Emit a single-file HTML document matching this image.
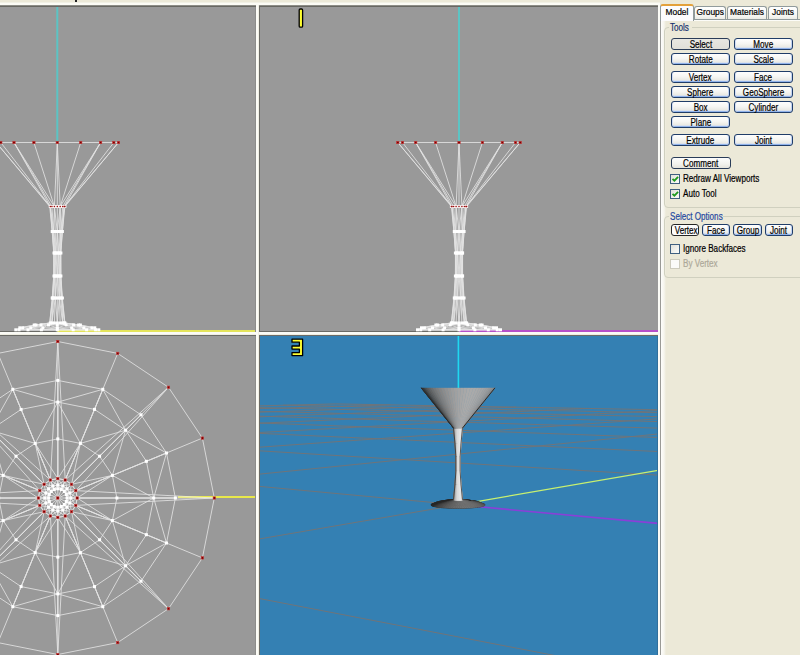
<!DOCTYPE html>
<html><head><meta charset="utf-8">
<style>
*{margin:0;padding:0;box-sizing:border-box}
html,body{width:800px;height:655px;overflow:hidden;background:#ece9d8;font-family:"Liberation Sans",sans-serif;font-size:11px;color:#000}
.a{position:absolute}
.vp{position:absolute;background:#999999;overflow:hidden}
svg{position:absolute;left:0;top:0}
.btn{position:absolute;height:12px;border:1px solid #203d68;border-radius:3px;background:linear-gradient(#fefefe,#f6f6f3 45%,#ebebe6 75%,#c4d4f2);box-shadow:inset 1px 0 0 #d2ddf4,inset -1px 0 0 #c0d2f2,inset 0 -1px 0 #90b2ea;text-align:center;font-size:10px;line-height:10px;white-space:nowrap;overflow:visible}
.btn span{display:inline-block;position:relative;top:1px;-webkit-text-stroke:0.2px #000;transform:scaleX(0.81);transform-origin:50% 0}
.btn.sel{background:linear-gradient(#e8e7e1,#e0dfd8);box-shadow:none;border-color:#2a3c58}
.btn.plain{background:linear-gradient(#fdfdfd,#f2f2ee 60%,#e4e3dc);box-shadow:none;border-color:#2a3c58}
.btn.wh{background:#fcfcfc;box-shadow:none;border-color:#262626}
.cb{position:absolute;width:10px;height:10px;border:1px solid #3f5f80;background:linear-gradient(135deg,#e0e0da,#fcfcfa)}
.cb svg{position:absolute;left:-1px;top:-1px}
.t{position:absolute;margin-top:0.8px;-webkit-text-stroke:0.2px currentColor;font-size:10px;line-height:10px;white-space:nowrap;transform:scaleX(0.81);transform-origin:0 0}
.tab{position:absolute;border:1px solid #919b9c;border-bottom:none;border-radius:3px 3px 0 0;background:linear-gradient(#fff,#f5f5f1 70%,#e8e8e1)}
.ts{position:absolute;-webkit-text-stroke:0.2px #000;left:0;right:0;top:0px;text-align:center;font-size:9.3px;line-height:10px;transform:scaleX(0.9)}
</style></head><body>
<!-- top strip -->
<div class="a" style="left:0;top:2px;width:660px;height:1px;background:#f2f1e6"></div>
<div class="a" style="left:0;top:3px;width:660px;height:2px;background:#fcfcf5"></div>
<div class="a" style="left:75px;top:0;width:2px;height:2px;background:#222"></div>
<!-- divider lines -->
<div class="a" style="left:0;top:332px;width:658px;height:2px;background:#fbfbf6"></div>
<div class="a" style="left:0;top:334px;width:658px;height:1px;background:#efeee2"></div>
<div class="a" style="left:256px;top:5px;width:2px;height:650px;background:#fbfbf6"></div>
<div class="a" style="left:258px;top:5px;width:1px;height:650px;background:#f0efe4"></div>
<div class="a" style="left:259px;top:5px;width:1px;height:327px;background:#6b6b66"></div>
<div class="a" style="left:259px;top:335px;width:1px;height:320px;background:#6b6b66"></div>
<div class="a" style="left:0;top:335px;width:256px;height:1px;background:#6b6b66"></div>
<div class="a" style="left:259px;top:335px;width:399px;height:1px;background:#6b6b66"></div>
<div class="a" style="left:658px;top:3px;width:2px;height:652px;background:#fbfbf6"></div>
<div class="a" style="left:660px;top:20px;width:1px;height:635px;background:#9a9a96"></div>
<!-- viewport TL -->
<div class="vp" style="left:0;top:6px;width:256px;height:326px">
<svg width="256" height="326"><rect x="0" y="325" width="256" height="1" fill="#6b6b66"/><line x1="57.3" y1="0" x2="57.3" y2="136.5" stroke="#5cc4c4" stroke-width="2"/><line x1="57.3" y1="325" x2="256" y2="325" stroke="#e4e45a" stroke-width="2"/><g stroke="#f0f0f0" stroke-width="0.85" opacity="0.85"><line x1="118.5" y1="136.5" x2="113.8" y2="136.5"/><line x1="118.5" y1="136.5" x2="64.9" y2="200.5"/><line x1="118.5" y1="136.5" x2="64.3" y2="200.5"/><line x1="113.8" y1="136.5" x2="100.6" y2="136.5"/><line x1="113.8" y1="136.5" x2="64.3" y2="200.5"/><line x1="100.6" y1="136.5" x2="64.3" y2="200.5"/><line x1="100.6" y1="136.5" x2="80.7" y2="136.5"/><line x1="100.6" y1="136.5" x2="62.7" y2="200.5"/><line x1="100.6" y1="136.5" x2="60.2" y2="200.5"/><line x1="80.7" y1="136.5" x2="57.3" y2="136.5"/><line x1="80.7" y1="136.5" x2="60.2" y2="200.5"/><line x1="57.3" y1="136.5" x2="60.2" y2="200.5"/><line x1="57.3" y1="136.5" x2="33.9" y2="136.5"/><line x1="57.3" y1="136.5" x2="57.3" y2="200.5"/><line x1="57.3" y1="136.5" x2="54.4" y2="200.5"/><line x1="33.9" y1="136.5" x2="14" y2="136.5"/><line x1="33.9" y1="136.5" x2="54.4" y2="200.5"/><line x1="14" y1="136.5" x2="54.4" y2="200.5"/><line x1="14" y1="136.5" x2="0.8" y2="136.5"/><line x1="14" y1="136.5" x2="51.9" y2="200.5"/><line x1="14" y1="136.5" x2="50.3" y2="200.5"/><line x1="0.8" y1="136.5" x2="-3.9" y2="136.5"/><line x1="0.8" y1="136.5" x2="50.3" y2="200.5"/><line x1="-3.9" y1="136.5" x2="50.3" y2="200.5"/><line x1="-3.9" y1="136.5" x2="49.7" y2="200.5"/><line x1="64.9" y1="200.5" x2="64.3" y2="200.5"/><line x1="64.9" y1="200.5" x2="62.4" y2="225.5"/><line x1="64.3" y1="200.5" x2="62.4" y2="225.5"/><line x1="64.3" y1="200.5" x2="62.7" y2="200.5"/><line x1="64.3" y1="200.5" x2="62" y2="225.5"/><line x1="64.3" y1="200.5" x2="60.9" y2="225.5"/><line x1="62.7" y1="200.5" x2="60.2" y2="200.5"/><line x1="62.7" y1="200.5" x2="60.9" y2="225.5"/><line x1="60.2" y1="200.5" x2="60.9" y2="225.5"/><line x1="60.2" y1="200.5" x2="57.3" y2="200.5"/><line x1="60.2" y1="200.5" x2="59.3" y2="225.5"/><line x1="60.2" y1="200.5" x2="57.3" y2="225.5"/><line x1="57.3" y1="200.5" x2="54.4" y2="200.5"/><line x1="57.3" y1="200.5" x2="57.3" y2="225.5"/><line x1="54.4" y1="200.5" x2="57.3" y2="225.5"/><line x1="54.4" y1="200.5" x2="51.9" y2="200.5"/><line x1="54.4" y1="200.5" x2="55.3" y2="225.5"/><line x1="54.4" y1="200.5" x2="53.7" y2="225.5"/><line x1="51.9" y1="200.5" x2="50.3" y2="200.5"/><line x1="51.9" y1="200.5" x2="53.7" y2="225.5"/><line x1="50.3" y1="200.5" x2="53.7" y2="225.5"/><line x1="50.3" y1="200.5" x2="49.7" y2="200.5"/><line x1="50.3" y1="200.5" x2="52.6" y2="225.5"/><line x1="50.3" y1="200.5" x2="52.2" y2="225.5"/><line x1="49.7" y1="200.5" x2="52.2" y2="225.5"/><line x1="62.4" y1="225.5" x2="62" y2="225.5"/><line x1="62.4" y1="225.5" x2="60.9" y2="247"/><line x1="62.4" y1="225.5" x2="60.6" y2="247"/><line x1="62" y1="225.5" x2="60.9" y2="225.5"/><line x1="62" y1="225.5" x2="60.6" y2="247"/><line x1="60.9" y1="225.5" x2="60.6" y2="247"/><line x1="60.9" y1="225.5" x2="59.3" y2="225.5"/><line x1="60.9" y1="225.5" x2="59.8" y2="247"/><line x1="60.9" y1="225.5" x2="58.7" y2="247"/><line x1="59.3" y1="225.5" x2="57.3" y2="225.5"/><line x1="59.3" y1="225.5" x2="58.7" y2="247"/><line x1="57.3" y1="225.5" x2="58.7" y2="247"/><line x1="57.3" y1="225.5" x2="55.3" y2="225.5"/><line x1="57.3" y1="225.5" x2="57.3" y2="247"/><line x1="57.3" y1="225.5" x2="55.9" y2="247"/><line x1="55.3" y1="225.5" x2="53.7" y2="225.5"/><line x1="55.3" y1="225.5" x2="55.9" y2="247"/><line x1="53.7" y1="225.5" x2="55.9" y2="247"/><line x1="53.7" y1="225.5" x2="52.6" y2="225.5"/><line x1="53.7" y1="225.5" x2="54.8" y2="247"/><line x1="53.7" y1="225.5" x2="54" y2="247"/><line x1="52.6" y1="225.5" x2="52.2" y2="225.5"/><line x1="52.6" y1="225.5" x2="54" y2="247"/><line x1="52.2" y1="225.5" x2="54" y2="247"/><line x1="52.2" y1="225.5" x2="53.7" y2="247"/><line x1="60.9" y1="247" x2="60.6" y2="247"/><line x1="60.9" y1="247" x2="60.9" y2="270"/><line x1="60.6" y1="247" x2="60.9" y2="270"/><line x1="60.6" y1="247" x2="59.8" y2="247"/><line x1="60.6" y1="247" x2="60.6" y2="270"/><line x1="60.6" y1="247" x2="59.8" y2="270"/><line x1="59.8" y1="247" x2="58.7" y2="247"/><line x1="59.8" y1="247" x2="59.8" y2="270"/><line x1="58.7" y1="247" x2="59.8" y2="270"/><line x1="58.7" y1="247" x2="57.3" y2="247"/><line x1="58.7" y1="247" x2="58.7" y2="270"/><line x1="58.7" y1="247" x2="57.3" y2="270"/><line x1="57.3" y1="247" x2="55.9" y2="247"/><line x1="57.3" y1="247" x2="57.3" y2="270"/><line x1="55.9" y1="247" x2="57.3" y2="270"/><line x1="55.9" y1="247" x2="54.8" y2="247"/><line x1="55.9" y1="247" x2="55.9" y2="270"/><line x1="55.9" y1="247" x2="54.8" y2="270"/><line x1="54.8" y1="247" x2="54" y2="247"/><line x1="54.8" y1="247" x2="54.8" y2="270"/><line x1="54" y1="247" x2="54.8" y2="270"/><line x1="54" y1="247" x2="53.7" y2="247"/><line x1="54" y1="247" x2="54" y2="270"/><line x1="54" y1="247" x2="53.7" y2="270"/><line x1="53.7" y1="247" x2="53.7" y2="270"/><line x1="60.9" y1="270" x2="60.6" y2="270"/><line x1="60.9" y1="270" x2="62.4" y2="292"/><line x1="60.9" y1="270" x2="62" y2="292"/><line x1="60.6" y1="270" x2="59.8" y2="270"/><line x1="60.6" y1="270" x2="62" y2="292"/><line x1="59.8" y1="270" x2="62" y2="292"/><line x1="59.8" y1="270" x2="58.7" y2="270"/><line x1="59.8" y1="270" x2="60.9" y2="292"/><line x1="59.8" y1="270" x2="59.3" y2="292"/><line x1="58.7" y1="270" x2="57.3" y2="270"/><line x1="58.7" y1="270" x2="59.3" y2="292"/><line x1="57.3" y1="270" x2="59.3" y2="292"/><line x1="57.3" y1="270" x2="55.9" y2="270"/><line x1="57.3" y1="270" x2="57.3" y2="292"/><line x1="57.3" y1="270" x2="55.3" y2="292"/><line x1="55.9" y1="270" x2="54.8" y2="270"/><line x1="55.9" y1="270" x2="55.3" y2="292"/><line x1="54.8" y1="270" x2="55.3" y2="292"/><line x1="54.8" y1="270" x2="54" y2="270"/><line x1="54.8" y1="270" x2="53.7" y2="292"/><line x1="54.8" y1="270" x2="52.6" y2="292"/><line x1="54" y1="270" x2="53.7" y2="270"/><line x1="54" y1="270" x2="52.6" y2="292"/><line x1="53.7" y1="270" x2="52.6" y2="292"/><line x1="53.7" y1="270" x2="52.2" y2="292"/><line x1="62.4" y1="292" x2="62" y2="292"/><line x1="62.4" y1="292" x2="64.9" y2="317"/><line x1="62" y1="292" x2="64.9" y2="317"/><line x1="62" y1="292" x2="60.9" y2="292"/><line x1="62" y1="292" x2="64.3" y2="317"/><line x1="62" y1="292" x2="62.7" y2="317"/><line x1="60.9" y1="292" x2="59.3" y2="292"/><line x1="60.9" y1="292" x2="62.7" y2="317"/><line x1="59.3" y1="292" x2="62.7" y2="317"/><line x1="59.3" y1="292" x2="57.3" y2="292"/><line x1="59.3" y1="292" x2="60.2" y2="317"/><line x1="59.3" y1="292" x2="57.3" y2="317"/><line x1="57.3" y1="292" x2="55.3" y2="292"/><line x1="57.3" y1="292" x2="57.3" y2="317"/><line x1="55.3" y1="292" x2="57.3" y2="317"/><line x1="55.3" y1="292" x2="53.7" y2="292"/><line x1="55.3" y1="292" x2="54.4" y2="317"/><line x1="55.3" y1="292" x2="51.9" y2="317"/><line x1="53.7" y1="292" x2="52.6" y2="292"/><line x1="53.7" y1="292" x2="51.9" y2="317"/><line x1="52.6" y1="292" x2="51.9" y2="317"/><line x1="52.6" y1="292" x2="52.2" y2="292"/><line x1="52.6" y1="292" x2="50.3" y2="317"/><line x1="52.6" y1="292" x2="49.7" y2="317"/><line x1="52.2" y1="292" x2="49.7" y2="317"/><line x1="64.9" y1="317" x2="64.3" y2="317"/><line x1="64.9" y1="317" x2="80.4" y2="319"/><line x1="64.9" y1="317" x2="78.6" y2="319"/><line x1="64.3" y1="317" x2="62.7" y2="317"/><line x1="64.3" y1="317" x2="78.6" y2="319"/><line x1="62.7" y1="317" x2="78.6" y2="319"/><line x1="62.7" y1="317" x2="60.2" y2="317"/><line x1="62.7" y1="317" x2="73.6" y2="319"/><line x1="62.7" y1="317" x2="66.1" y2="319"/><line x1="60.2" y1="317" x2="57.3" y2="317"/><line x1="60.2" y1="317" x2="66.1" y2="319"/><line x1="57.3" y1="317" x2="66.1" y2="319"/><line x1="57.3" y1="317" x2="54.4" y2="317"/><line x1="57.3" y1="317" x2="57.3" y2="319"/><line x1="57.3" y1="317" x2="48.5" y2="319"/><line x1="54.4" y1="317" x2="51.9" y2="317"/><line x1="54.4" y1="317" x2="48.5" y2="319"/><line x1="51.9" y1="317" x2="48.5" y2="319"/><line x1="51.9" y1="317" x2="50.3" y2="317"/><line x1="51.9" y1="317" x2="41" y2="319"/><line x1="51.9" y1="317" x2="36" y2="319"/><line x1="50.3" y1="317" x2="49.7" y2="317"/><line x1="50.3" y1="317" x2="36" y2="319"/><line x1="49.7" y1="317" x2="36" y2="319"/><line x1="49.7" y1="317" x2="34.2" y2="319"/><line x1="80.4" y1="319" x2="78.6" y2="319"/><line x1="80.4" y1="319" x2="94.8" y2="321.8"/><line x1="78.6" y1="319" x2="94.8" y2="321.8"/><line x1="78.6" y1="319" x2="73.6" y2="319"/><line x1="78.6" y1="319" x2="91.9" y2="321.8"/><line x1="78.6" y1="319" x2="83.8" y2="321.8"/><line x1="73.6" y1="319" x2="66.1" y2="319"/><line x1="73.6" y1="319" x2="83.8" y2="321.8"/><line x1="66.1" y1="319" x2="83.8" y2="321.8"/><line x1="66.1" y1="319" x2="57.3" y2="319"/><line x1="66.1" y1="319" x2="71.7" y2="321.8"/><line x1="66.1" y1="319" x2="57.3" y2="321.8"/><line x1="57.3" y1="319" x2="48.5" y2="319"/><line x1="57.3" y1="319" x2="57.3" y2="321.8"/><line x1="48.5" y1="319" x2="57.3" y2="321.8"/><line x1="48.5" y1="319" x2="41" y2="319"/><line x1="48.5" y1="319" x2="42.9" y2="321.8"/><line x1="48.5" y1="319" x2="30.8" y2="321.8"/><line x1="41" y1="319" x2="36" y2="319"/><line x1="41" y1="319" x2="30.8" y2="321.8"/><line x1="36" y1="319" x2="30.8" y2="321.8"/><line x1="36" y1="319" x2="34.2" y2="319"/><line x1="36" y1="319" x2="22.7" y2="321.8"/><line x1="36" y1="319" x2="19.8" y2="321.8"/><line x1="34.2" y1="319" x2="19.8" y2="321.8"/><line x1="94.8" y1="321.8" x2="91.9" y2="321.8"/><line x1="94.8" y1="321.8" x2="98.8" y2="323.8"/><line x1="94.8" y1="321.8" x2="95.6" y2="323.8"/><line x1="91.9" y1="321.8" x2="83.8" y2="321.8"/><line x1="91.9" y1="321.8" x2="95.6" y2="323.8"/><line x1="83.8" y1="321.8" x2="95.6" y2="323.8"/><line x1="83.8" y1="321.8" x2="71.7" y2="321.8"/><line x1="83.8" y1="321.8" x2="86.6" y2="323.8"/><line x1="83.8" y1="321.8" x2="73.2" y2="323.8"/><line x1="71.7" y1="321.8" x2="57.3" y2="321.8"/><line x1="71.7" y1="321.8" x2="73.2" y2="323.8"/><line x1="57.3" y1="321.8" x2="73.2" y2="323.8"/><line x1="57.3" y1="321.8" x2="42.9" y2="321.8"/><line x1="57.3" y1="321.8" x2="57.3" y2="323.8"/><line x1="57.3" y1="321.8" x2="41.4" y2="323.8"/><line x1="42.9" y1="321.8" x2="30.8" y2="321.8"/><line x1="42.9" y1="321.8" x2="41.4" y2="323.8"/><line x1="30.8" y1="321.8" x2="41.4" y2="323.8"/><line x1="30.8" y1="321.8" x2="22.7" y2="321.8"/><line x1="30.8" y1="321.8" x2="28" y2="323.8"/><line x1="30.8" y1="321.8" x2="19" y2="323.8"/><line x1="22.7" y1="321.8" x2="19.8" y2="321.8"/><line x1="22.7" y1="321.8" x2="19" y2="323.8"/><line x1="19.8" y1="321.8" x2="19" y2="323.8"/><line x1="19.8" y1="321.8" x2="15.8" y2="323.8"/><line x1="98.8" y1="323.8" x2="95.6" y2="323.8"/><line x1="95.6" y1="323.8" x2="86.6" y2="323.8"/><line x1="86.6" y1="323.8" x2="73.2" y2="323.8"/><line x1="73.2" y1="323.8" x2="57.3" y2="323.8"/><line x1="57.3" y1="323.8" x2="41.4" y2="323.8"/><line x1="41.4" y1="323.8" x2="28" y2="323.8"/><line x1="28" y1="323.8" x2="19" y2="323.8"/><line x1="19" y1="323.8" x2="15.8" y2="323.8"/><line x1="98.8" y1="323.8" x2="57.3" y2="323.8"/><line x1="95.6" y1="323.8" x2="57.3" y2="323.8"/><line x1="86.6" y1="323.8" x2="57.3" y2="323.8"/><line x1="28" y1="323.8" x2="57.3" y2="323.8"/><line x1="19" y1="323.8" x2="57.3" y2="323.8"/><line x1="15.8" y1="323.8" x2="57.3" y2="323.8"/></g><g fill="#ffffff"><rect x="63.4" y="199" width="3" height="3"/><rect x="62.8" y="199" width="3" height="3"/><rect x="61.2" y="199" width="3" height="3"/><rect x="58.7" y="199" width="3" height="3"/><rect x="55.8" y="199" width="3" height="3"/><rect x="52.9" y="199" width="3" height="3"/><rect x="50.4" y="199" width="3" height="3"/><rect x="48.8" y="199" width="3" height="3"/><rect x="60.9" y="224" width="3" height="3"/><rect x="59.4" y="224" width="3" height="3"/><rect x="57.8" y="224" width="3" height="3"/><rect x="55.8" y="224" width="3" height="3"/><rect x="53.8" y="224" width="3" height="3"/><rect x="52.2" y="224" width="3" height="3"/><rect x="51.1" y="224" width="3" height="3"/><rect x="50.7" y="224" width="3" height="3"/><rect x="59.4" y="245.5" width="3" height="3"/><rect x="58.3" y="245.5" width="3" height="3"/><rect x="57.2" y="245.5" width="3" height="3"/><rect x="55.8" y="245.5" width="3" height="3"/><rect x="54.4" y="245.5" width="3" height="3"/><rect x="53.3" y="245.5" width="3" height="3"/><rect x="52.5" y="245.5" width="3" height="3"/><rect x="59.4" y="268.5" width="3" height="3"/><rect x="58.3" y="268.5" width="3" height="3"/><rect x="57.2" y="268.5" width="3" height="3"/><rect x="55.8" y="268.5" width="3" height="3"/><rect x="54.4" y="268.5" width="3" height="3"/><rect x="53.3" y="268.5" width="3" height="3"/><rect x="52.5" y="268.5" width="3" height="3"/><rect x="60.9" y="290.5" width="3" height="3"/><rect x="59.4" y="290.5" width="3" height="3"/><rect x="57.8" y="290.5" width="3" height="3"/><rect x="55.8" y="290.5" width="3" height="3"/><rect x="53.8" y="290.5" width="3" height="3"/><rect x="52.2" y="290.5" width="3" height="3"/><rect x="51.1" y="290.5" width="3" height="3"/><rect x="50.7" y="290.5" width="3" height="3"/><rect x="63.4" y="315.5" width="3" height="3"/><rect x="62.8" y="315.5" width="3" height="3"/><rect x="61.2" y="315.5" width="3" height="3"/><rect x="58.7" y="315.5" width="3" height="3"/><rect x="55.8" y="315.5" width="3" height="3"/><rect x="52.9" y="315.5" width="3" height="3"/><rect x="50.4" y="315.5" width="3" height="3"/><rect x="48.8" y="315.5" width="3" height="3"/><rect x="78.9" y="317.5" width="3" height="3"/><rect x="77.1" y="317.5" width="3" height="3"/><rect x="72.1" y="317.5" width="3" height="3"/><rect x="64.6" y="317.5" width="3" height="3"/><rect x="55.8" y="317.5" width="3" height="3"/><rect x="47" y="317.5" width="3" height="3"/><rect x="39.5" y="317.5" width="3" height="3"/><rect x="34.5" y="317.5" width="3" height="3"/><rect x="32.7" y="317.5" width="3" height="3"/><rect x="93.3" y="320.3" width="3" height="3"/><rect x="90.4" y="320.3" width="3" height="3"/><rect x="82.3" y="320.3" width="3" height="3"/><rect x="70.2" y="320.3" width="3" height="3"/><rect x="55.8" y="320.3" width="3" height="3"/><rect x="41.4" y="320.3" width="3" height="3"/><rect x="29.3" y="320.3" width="3" height="3"/><rect x="21.2" y="320.3" width="3" height="3"/><rect x="18.3" y="320.3" width="3" height="3"/><rect x="97.3" y="322.3" width="3" height="3"/><rect x="94.1" y="322.3" width="3" height="3"/><rect x="85.1" y="322.3" width="3" height="3"/><rect x="71.7" y="322.3" width="3" height="3"/><rect x="55.8" y="322.3" width="3" height="3"/><rect x="39.9" y="322.3" width="3" height="3"/><rect x="26.5" y="322.3" width="3" height="3"/><rect x="17.5" y="322.3" width="3" height="3"/><rect x="14.3" y="322.3" width="3" height="3"/></g><g fill="#7a0000" stroke="#c83a3a" stroke-width="0.6"><rect x="117.3" y="135.3" width="2.4" height="2.4"/><rect x="112.6" y="135.3" width="2.4" height="2.4"/><rect x="99.4" y="135.3" width="2.4" height="2.4"/><rect x="79.5" y="135.3" width="2.4" height="2.4"/><rect x="56.1" y="135.3" width="2.4" height="2.4"/><rect x="32.7" y="135.3" width="2.4" height="2.4"/><rect x="12.8" y="135.3" width="2.4" height="2.4"/><rect x="-0.4" y="135.3" width="2.4" height="2.4"/><rect x="-5.1" y="135.3" width="2.4" height="2.4"/></g><g fill="#9a1010"><rect x="64.2" y="199.8" width="1.4" height="1.4"/><rect x="63.6" y="199.8" width="1.4" height="1.4"/><rect x="62" y="199.8" width="1.4" height="1.4"/><rect x="59.5" y="199.8" width="1.4" height="1.4"/><rect x="56.6" y="199.8" width="1.4" height="1.4"/><rect x="53.7" y="199.8" width="1.4" height="1.4"/><rect x="51.2" y="199.8" width="1.4" height="1.4"/><rect x="49.6" y="199.8" width="1.4" height="1.4"/></g></svg>
</div>
<!-- viewport TR -->
<div class="vp" style="left:260px;top:6px;width:398px;height:326px">
<svg width="398" height="326"><rect x="0" y="325" width="398" height="1" fill="#6b6b66"/><line x1="199" y1="0" x2="199" y2="136.5" stroke="#5cc4c4" stroke-width="2"/><line x1="199" y1="325" x2="398" y2="325" stroke="#b550c8" stroke-width="2"/><g stroke="#f0f0f0" stroke-width="0.85" opacity="0.85"><line x1="260.2" y1="136.5" x2="255.5" y2="136.5"/><line x1="260.2" y1="136.5" x2="206.6" y2="200.5"/><line x1="260.2" y1="136.5" x2="206" y2="200.5"/><line x1="255.5" y1="136.5" x2="242.3" y2="136.5"/><line x1="255.5" y1="136.5" x2="206" y2="200.5"/><line x1="242.3" y1="136.5" x2="206" y2="200.5"/><line x1="242.3" y1="136.5" x2="222.4" y2="136.5"/><line x1="242.3" y1="136.5" x2="204.4" y2="200.5"/><line x1="242.3" y1="136.5" x2="201.9" y2="200.5"/><line x1="222.4" y1="136.5" x2="199" y2="136.5"/><line x1="222.4" y1="136.5" x2="201.9" y2="200.5"/><line x1="199" y1="136.5" x2="201.9" y2="200.5"/><line x1="199" y1="136.5" x2="175.6" y2="136.5"/><line x1="199" y1="136.5" x2="199" y2="200.5"/><line x1="199" y1="136.5" x2="196.1" y2="200.5"/><line x1="175.6" y1="136.5" x2="155.7" y2="136.5"/><line x1="175.6" y1="136.5" x2="196.1" y2="200.5"/><line x1="155.7" y1="136.5" x2="196.1" y2="200.5"/><line x1="155.7" y1="136.5" x2="142.5" y2="136.5"/><line x1="155.7" y1="136.5" x2="193.6" y2="200.5"/><line x1="155.7" y1="136.5" x2="192" y2="200.5"/><line x1="142.5" y1="136.5" x2="137.8" y2="136.5"/><line x1="142.5" y1="136.5" x2="192" y2="200.5"/><line x1="137.8" y1="136.5" x2="192" y2="200.5"/><line x1="137.8" y1="136.5" x2="191.4" y2="200.5"/><line x1="206.6" y1="200.5" x2="206" y2="200.5"/><line x1="206.6" y1="200.5" x2="204.1" y2="225.5"/><line x1="206" y1="200.5" x2="204.1" y2="225.5"/><line x1="206" y1="200.5" x2="204.4" y2="200.5"/><line x1="206" y1="200.5" x2="203.7" y2="225.5"/><line x1="206" y1="200.5" x2="202.6" y2="225.5"/><line x1="204.4" y1="200.5" x2="201.9" y2="200.5"/><line x1="204.4" y1="200.5" x2="202.6" y2="225.5"/><line x1="201.9" y1="200.5" x2="202.6" y2="225.5"/><line x1="201.9" y1="200.5" x2="199" y2="200.5"/><line x1="201.9" y1="200.5" x2="201" y2="225.5"/><line x1="201.9" y1="200.5" x2="199" y2="225.5"/><line x1="199" y1="200.5" x2="196.1" y2="200.5"/><line x1="199" y1="200.5" x2="199" y2="225.5"/><line x1="196.1" y1="200.5" x2="199" y2="225.5"/><line x1="196.1" y1="200.5" x2="193.6" y2="200.5"/><line x1="196.1" y1="200.5" x2="197" y2="225.5"/><line x1="196.1" y1="200.5" x2="195.4" y2="225.5"/><line x1="193.6" y1="200.5" x2="192" y2="200.5"/><line x1="193.6" y1="200.5" x2="195.4" y2="225.5"/><line x1="192" y1="200.5" x2="195.4" y2="225.5"/><line x1="192" y1="200.5" x2="191.4" y2="200.5"/><line x1="192" y1="200.5" x2="194.3" y2="225.5"/><line x1="192" y1="200.5" x2="193.9" y2="225.5"/><line x1="191.4" y1="200.5" x2="193.9" y2="225.5"/><line x1="204.1" y1="225.5" x2="203.7" y2="225.5"/><line x1="204.1" y1="225.5" x2="202.6" y2="247"/><line x1="204.1" y1="225.5" x2="202.3" y2="247"/><line x1="203.7" y1="225.5" x2="202.6" y2="225.5"/><line x1="203.7" y1="225.5" x2="202.3" y2="247"/><line x1="202.6" y1="225.5" x2="202.3" y2="247"/><line x1="202.6" y1="225.5" x2="201" y2="225.5"/><line x1="202.6" y1="225.5" x2="201.5" y2="247"/><line x1="202.6" y1="225.5" x2="200.4" y2="247"/><line x1="201" y1="225.5" x2="199" y2="225.5"/><line x1="201" y1="225.5" x2="200.4" y2="247"/><line x1="199" y1="225.5" x2="200.4" y2="247"/><line x1="199" y1="225.5" x2="197" y2="225.5"/><line x1="199" y1="225.5" x2="199" y2="247"/><line x1="199" y1="225.5" x2="197.6" y2="247"/><line x1="197" y1="225.5" x2="195.4" y2="225.5"/><line x1="197" y1="225.5" x2="197.6" y2="247"/><line x1="195.4" y1="225.5" x2="197.6" y2="247"/><line x1="195.4" y1="225.5" x2="194.3" y2="225.5"/><line x1="195.4" y1="225.5" x2="196.5" y2="247"/><line x1="195.4" y1="225.5" x2="195.7" y2="247"/><line x1="194.3" y1="225.5" x2="193.9" y2="225.5"/><line x1="194.3" y1="225.5" x2="195.7" y2="247"/><line x1="193.9" y1="225.5" x2="195.7" y2="247"/><line x1="193.9" y1="225.5" x2="195.4" y2="247"/><line x1="202.6" y1="247" x2="202.3" y2="247"/><line x1="202.6" y1="247" x2="202.6" y2="270"/><line x1="202.3" y1="247" x2="202.6" y2="270"/><line x1="202.3" y1="247" x2="201.5" y2="247"/><line x1="202.3" y1="247" x2="202.3" y2="270"/><line x1="202.3" y1="247" x2="201.5" y2="270"/><line x1="201.5" y1="247" x2="200.4" y2="247"/><line x1="201.5" y1="247" x2="201.5" y2="270"/><line x1="200.4" y1="247" x2="201.5" y2="270"/><line x1="200.4" y1="247" x2="199" y2="247"/><line x1="200.4" y1="247" x2="200.4" y2="270"/><line x1="200.4" y1="247" x2="199" y2="270"/><line x1="199" y1="247" x2="197.6" y2="247"/><line x1="199" y1="247" x2="199" y2="270"/><line x1="197.6" y1="247" x2="199" y2="270"/><line x1="197.6" y1="247" x2="196.5" y2="247"/><line x1="197.6" y1="247" x2="197.6" y2="270"/><line x1="197.6" y1="247" x2="196.5" y2="270"/><line x1="196.5" y1="247" x2="195.7" y2="247"/><line x1="196.5" y1="247" x2="196.5" y2="270"/><line x1="195.7" y1="247" x2="196.5" y2="270"/><line x1="195.7" y1="247" x2="195.4" y2="247"/><line x1="195.7" y1="247" x2="195.7" y2="270"/><line x1="195.7" y1="247" x2="195.4" y2="270"/><line x1="195.4" y1="247" x2="195.4" y2="270"/><line x1="202.6" y1="270" x2="202.3" y2="270"/><line x1="202.6" y1="270" x2="204.1" y2="292"/><line x1="202.6" y1="270" x2="203.7" y2="292"/><line x1="202.3" y1="270" x2="201.5" y2="270"/><line x1="202.3" y1="270" x2="203.7" y2="292"/><line x1="201.5" y1="270" x2="203.7" y2="292"/><line x1="201.5" y1="270" x2="200.4" y2="270"/><line x1="201.5" y1="270" x2="202.6" y2="292"/><line x1="201.5" y1="270" x2="201" y2="292"/><line x1="200.4" y1="270" x2="199" y2="270"/><line x1="200.4" y1="270" x2="201" y2="292"/><line x1="199" y1="270" x2="201" y2="292"/><line x1="199" y1="270" x2="197.6" y2="270"/><line x1="199" y1="270" x2="199" y2="292"/><line x1="199" y1="270" x2="197" y2="292"/><line x1="197.6" y1="270" x2="196.5" y2="270"/><line x1="197.6" y1="270" x2="197" y2="292"/><line x1="196.5" y1="270" x2="197" y2="292"/><line x1="196.5" y1="270" x2="195.7" y2="270"/><line x1="196.5" y1="270" x2="195.4" y2="292"/><line x1="196.5" y1="270" x2="194.3" y2="292"/><line x1="195.7" y1="270" x2="195.4" y2="270"/><line x1="195.7" y1="270" x2="194.3" y2="292"/><line x1="195.4" y1="270" x2="194.3" y2="292"/><line x1="195.4" y1="270" x2="193.9" y2="292"/><line x1="204.1" y1="292" x2="203.7" y2="292"/><line x1="204.1" y1="292" x2="206.6" y2="317"/><line x1="203.7" y1="292" x2="206.6" y2="317"/><line x1="203.7" y1="292" x2="202.6" y2="292"/><line x1="203.7" y1="292" x2="206" y2="317"/><line x1="203.7" y1="292" x2="204.4" y2="317"/><line x1="202.6" y1="292" x2="201" y2="292"/><line x1="202.6" y1="292" x2="204.4" y2="317"/><line x1="201" y1="292" x2="204.4" y2="317"/><line x1="201" y1="292" x2="199" y2="292"/><line x1="201" y1="292" x2="201.9" y2="317"/><line x1="201" y1="292" x2="199" y2="317"/><line x1="199" y1="292" x2="197" y2="292"/><line x1="199" y1="292" x2="199" y2="317"/><line x1="197" y1="292" x2="199" y2="317"/><line x1="197" y1="292" x2="195.4" y2="292"/><line x1="197" y1="292" x2="196.1" y2="317"/><line x1="197" y1="292" x2="193.6" y2="317"/><line x1="195.4" y1="292" x2="194.3" y2="292"/><line x1="195.4" y1="292" x2="193.6" y2="317"/><line x1="194.3" y1="292" x2="193.6" y2="317"/><line x1="194.3" y1="292" x2="193.9" y2="292"/><line x1="194.3" y1="292" x2="192" y2="317"/><line x1="194.3" y1="292" x2="191.4" y2="317"/><line x1="193.9" y1="292" x2="191.4" y2="317"/><line x1="206.6" y1="317" x2="206" y2="317"/><line x1="206.6" y1="317" x2="222.1" y2="319"/><line x1="206.6" y1="317" x2="220.3" y2="319"/><line x1="206" y1="317" x2="204.4" y2="317"/><line x1="206" y1="317" x2="220.3" y2="319"/><line x1="204.4" y1="317" x2="220.3" y2="319"/><line x1="204.4" y1="317" x2="201.9" y2="317"/><line x1="204.4" y1="317" x2="215.3" y2="319"/><line x1="204.4" y1="317" x2="207.8" y2="319"/><line x1="201.9" y1="317" x2="199" y2="317"/><line x1="201.9" y1="317" x2="207.8" y2="319"/><line x1="199" y1="317" x2="207.8" y2="319"/><line x1="199" y1="317" x2="196.1" y2="317"/><line x1="199" y1="317" x2="199" y2="319"/><line x1="199" y1="317" x2="190.2" y2="319"/><line x1="196.1" y1="317" x2="193.6" y2="317"/><line x1="196.1" y1="317" x2="190.2" y2="319"/><line x1="193.6" y1="317" x2="190.2" y2="319"/><line x1="193.6" y1="317" x2="192" y2="317"/><line x1="193.6" y1="317" x2="182.7" y2="319"/><line x1="193.6" y1="317" x2="177.7" y2="319"/><line x1="192" y1="317" x2="191.4" y2="317"/><line x1="192" y1="317" x2="177.7" y2="319"/><line x1="191.4" y1="317" x2="177.7" y2="319"/><line x1="191.4" y1="317" x2="175.9" y2="319"/><line x1="222.1" y1="319" x2="220.3" y2="319"/><line x1="222.1" y1="319" x2="236.5" y2="321.8"/><line x1="220.3" y1="319" x2="236.5" y2="321.8"/><line x1="220.3" y1="319" x2="215.3" y2="319"/><line x1="220.3" y1="319" x2="233.6" y2="321.8"/><line x1="220.3" y1="319" x2="225.5" y2="321.8"/><line x1="215.3" y1="319" x2="207.8" y2="319"/><line x1="215.3" y1="319" x2="225.5" y2="321.8"/><line x1="207.8" y1="319" x2="225.5" y2="321.8"/><line x1="207.8" y1="319" x2="199" y2="319"/><line x1="207.8" y1="319" x2="213.4" y2="321.8"/><line x1="207.8" y1="319" x2="199" y2="321.8"/><line x1="199" y1="319" x2="190.2" y2="319"/><line x1="199" y1="319" x2="199" y2="321.8"/><line x1="190.2" y1="319" x2="199" y2="321.8"/><line x1="190.2" y1="319" x2="182.7" y2="319"/><line x1="190.2" y1="319" x2="184.6" y2="321.8"/><line x1="190.2" y1="319" x2="172.5" y2="321.8"/><line x1="182.7" y1="319" x2="177.7" y2="319"/><line x1="182.7" y1="319" x2="172.5" y2="321.8"/><line x1="177.7" y1="319" x2="172.5" y2="321.8"/><line x1="177.7" y1="319" x2="175.9" y2="319"/><line x1="177.7" y1="319" x2="164.4" y2="321.8"/><line x1="177.7" y1="319" x2="161.5" y2="321.8"/><line x1="175.9" y1="319" x2="161.5" y2="321.8"/><line x1="236.5" y1="321.8" x2="233.6" y2="321.8"/><line x1="236.5" y1="321.8" x2="240.5" y2="323.8"/><line x1="236.5" y1="321.8" x2="237.3" y2="323.8"/><line x1="233.6" y1="321.8" x2="225.5" y2="321.8"/><line x1="233.6" y1="321.8" x2="237.3" y2="323.8"/><line x1="225.5" y1="321.8" x2="237.3" y2="323.8"/><line x1="225.5" y1="321.8" x2="213.4" y2="321.8"/><line x1="225.5" y1="321.8" x2="228.3" y2="323.8"/><line x1="225.5" y1="321.8" x2="214.9" y2="323.8"/><line x1="213.4" y1="321.8" x2="199" y2="321.8"/><line x1="213.4" y1="321.8" x2="214.9" y2="323.8"/><line x1="199" y1="321.8" x2="214.9" y2="323.8"/><line x1="199" y1="321.8" x2="184.6" y2="321.8"/><line x1="199" y1="321.8" x2="199" y2="323.8"/><line x1="199" y1="321.8" x2="183.1" y2="323.8"/><line x1="184.6" y1="321.8" x2="172.5" y2="321.8"/><line x1="184.6" y1="321.8" x2="183.1" y2="323.8"/><line x1="172.5" y1="321.8" x2="183.1" y2="323.8"/><line x1="172.5" y1="321.8" x2="164.4" y2="321.8"/><line x1="172.5" y1="321.8" x2="169.7" y2="323.8"/><line x1="172.5" y1="321.8" x2="160.7" y2="323.8"/><line x1="164.4" y1="321.8" x2="161.5" y2="321.8"/><line x1="164.4" y1="321.8" x2="160.7" y2="323.8"/><line x1="161.5" y1="321.8" x2="160.7" y2="323.8"/><line x1="161.5" y1="321.8" x2="157.5" y2="323.8"/><line x1="240.5" y1="323.8" x2="237.3" y2="323.8"/><line x1="237.3" y1="323.8" x2="228.3" y2="323.8"/><line x1="228.3" y1="323.8" x2="214.9" y2="323.8"/><line x1="214.9" y1="323.8" x2="199" y2="323.8"/><line x1="199" y1="323.8" x2="183.1" y2="323.8"/><line x1="183.1" y1="323.8" x2="169.7" y2="323.8"/><line x1="169.7" y1="323.8" x2="160.7" y2="323.8"/><line x1="160.7" y1="323.8" x2="157.5" y2="323.8"/><line x1="240.5" y1="323.8" x2="199" y2="323.8"/><line x1="237.3" y1="323.8" x2="199" y2="323.8"/><line x1="228.3" y1="323.8" x2="199" y2="323.8"/><line x1="169.7" y1="323.8" x2="199" y2="323.8"/><line x1="160.7" y1="323.8" x2="199" y2="323.8"/><line x1="157.5" y1="323.8" x2="199" y2="323.8"/></g><g fill="#ffffff"><rect x="205.1" y="199" width="3" height="3"/><rect x="204.5" y="199" width="3" height="3"/><rect x="202.9" y="199" width="3" height="3"/><rect x="200.4" y="199" width="3" height="3"/><rect x="197.5" y="199" width="3" height="3"/><rect x="194.6" y="199" width="3" height="3"/><rect x="192.1" y="199" width="3" height="3"/><rect x="190.5" y="199" width="3" height="3"/><rect x="189.9" y="199" width="3" height="3"/><rect x="202.6" y="224" width="3" height="3"/><rect x="201.1" y="224" width="3" height="3"/><rect x="199.5" y="224" width="3" height="3"/><rect x="197.5" y="224" width="3" height="3"/><rect x="195.5" y="224" width="3" height="3"/><rect x="193.9" y="224" width="3" height="3"/><rect x="192.8" y="224" width="3" height="3"/><rect x="201.1" y="245.5" width="3" height="3"/><rect x="200.8" y="245.5" width="3" height="3"/><rect x="198.9" y="245.5" width="3" height="3"/><rect x="197.5" y="245.5" width="3" height="3"/><rect x="196.1" y="245.5" width="3" height="3"/><rect x="195" y="245.5" width="3" height="3"/><rect x="193.9" y="245.5" width="3" height="3"/><rect x="201.1" y="268.5" width="3" height="3"/><rect x="200.8" y="268.5" width="3" height="3"/><rect x="198.9" y="268.5" width="3" height="3"/><rect x="197.5" y="268.5" width="3" height="3"/><rect x="196.1" y="268.5" width="3" height="3"/><rect x="195" y="268.5" width="3" height="3"/><rect x="193.9" y="268.5" width="3" height="3"/><rect x="202.6" y="290.5" width="3" height="3"/><rect x="201.1" y="290.5" width="3" height="3"/><rect x="199.5" y="290.5" width="3" height="3"/><rect x="197.5" y="290.5" width="3" height="3"/><rect x="195.5" y="290.5" width="3" height="3"/><rect x="193.9" y="290.5" width="3" height="3"/><rect x="192.8" y="290.5" width="3" height="3"/><rect x="205.1" y="315.5" width="3" height="3"/><rect x="204.5" y="315.5" width="3" height="3"/><rect x="202.9" y="315.5" width="3" height="3"/><rect x="200.4" y="315.5" width="3" height="3"/><rect x="197.5" y="315.5" width="3" height="3"/><rect x="194.6" y="315.5" width="3" height="3"/><rect x="192.1" y="315.5" width="3" height="3"/><rect x="190.5" y="315.5" width="3" height="3"/><rect x="189.9" y="315.5" width="3" height="3"/><rect x="220.6" y="317.5" width="3" height="3"/><rect x="218.8" y="317.5" width="3" height="3"/><rect x="213.8" y="317.5" width="3" height="3"/><rect x="206.3" y="317.5" width="3" height="3"/><rect x="197.5" y="317.5" width="3" height="3"/><rect x="188.7" y="317.5" width="3" height="3"/><rect x="181.2" y="317.5" width="3" height="3"/><rect x="176.2" y="317.5" width="3" height="3"/><rect x="174.4" y="317.5" width="3" height="3"/><rect x="235" y="320.3" width="3" height="3"/><rect x="232.1" y="320.3" width="3" height="3"/><rect x="224" y="320.3" width="3" height="3"/><rect x="211.9" y="320.3" width="3" height="3"/><rect x="197.5" y="320.3" width="3" height="3"/><rect x="183.1" y="320.3" width="3" height="3"/><rect x="171" y="320.3" width="3" height="3"/><rect x="162.9" y="320.3" width="3" height="3"/><rect x="160" y="320.3" width="3" height="3"/><rect x="239" y="322.3" width="3" height="3"/><rect x="235.8" y="322.3" width="3" height="3"/><rect x="226.8" y="322.3" width="3" height="3"/><rect x="213.4" y="322.3" width="3" height="3"/><rect x="197.5" y="322.3" width="3" height="3"/><rect x="181.6" y="322.3" width="3" height="3"/><rect x="168.2" y="322.3" width="3" height="3"/><rect x="159.2" y="322.3" width="3" height="3"/><rect x="156" y="322.3" width="3" height="3"/></g><g fill="#7a0000" stroke="#c83a3a" stroke-width="0.6"><rect x="259" y="135.3" width="2.4" height="2.4"/><rect x="254.3" y="135.3" width="2.4" height="2.4"/><rect x="241.1" y="135.3" width="2.4" height="2.4"/><rect x="221.2" y="135.3" width="2.4" height="2.4"/><rect x="197.8" y="135.3" width="2.4" height="2.4"/><rect x="174.4" y="135.3" width="2.4" height="2.4"/><rect x="154.5" y="135.3" width="2.4" height="2.4"/><rect x="141.3" y="135.3" width="2.4" height="2.4"/><rect x="136.6" y="135.3" width="2.4" height="2.4"/></g><g fill="#9a1010"><rect x="205.9" y="199.8" width="1.4" height="1.4"/><rect x="205.3" y="199.8" width="1.4" height="1.4"/><rect x="203.7" y="199.8" width="1.4" height="1.4"/><rect x="201.2" y="199.8" width="1.4" height="1.4"/><rect x="198.3" y="199.8" width="1.4" height="1.4"/><rect x="195.4" y="199.8" width="1.4" height="1.4"/><rect x="192.9" y="199.8" width="1.4" height="1.4"/><rect x="191.3" y="199.8" width="1.4" height="1.4"/><rect x="190.7" y="199.8" width="1.4" height="1.4"/></g><rect x="39.2" y="3" width="3.4" height="18.2" rx="1" fill="#ffff30" stroke="#000" stroke-width="1.3"/></svg>
</div>
<!-- viewport BL -->
<div class="vp" style="left:0;top:336px;width:256px;height:319px">
<svg width="256" height="319"><line x1="178" y1="161" x2="256" y2="161" stroke="#e8e84a" stroke-width="2"/><g stroke="#f0f0f0" stroke-width="0.85" opacity="0.85"><line x1="214.3" y1="162" x2="202.4" y2="102.1"/><line x1="214.3" y1="162" x2="77.2" y2="162"/><line x1="214.3" y1="162" x2="75.8" y2="154.6"/><line x1="202.4" y1="102.1" x2="168.5" y2="51.3"/><line x1="202.4" y1="102.1" x2="75.8" y2="154.6"/><line x1="168.5" y1="51.3" x2="75.8" y2="154.6"/><line x1="168.5" y1="51.3" x2="117.7" y2="17.4"/><line x1="168.5" y1="51.3" x2="71.5" y2="148.3"/><line x1="168.5" y1="51.3" x2="65.2" y2="144"/><line x1="117.7" y1="17.4" x2="57.8" y2="5.5"/><line x1="117.7" y1="17.4" x2="65.2" y2="144"/><line x1="57.8" y1="5.5" x2="65.2" y2="144"/><line x1="57.8" y1="5.5" x2="-2.1" y2="17.4"/><line x1="57.8" y1="5.5" x2="57.8" y2="142.6"/><line x1="57.8" y1="5.5" x2="50.4" y2="144"/><line x1="-2.1" y1="17.4" x2="-52.9" y2="51.3"/><line x1="-2.1" y1="17.4" x2="50.4" y2="144"/><line x1="-52.9" y1="51.3" x2="50.4" y2="144"/><line x1="-52.9" y1="51.3" x2="-86.8" y2="102.1"/><line x1="-52.9" y1="51.3" x2="44.1" y2="148.3"/><line x1="-52.9" y1="51.3" x2="39.8" y2="154.6"/><line x1="-86.8" y1="102.1" x2="-98.7" y2="162"/><line x1="-86.8" y1="102.1" x2="39.8" y2="154.6"/><line x1="-98.7" y1="162" x2="39.8" y2="154.6"/><line x1="-98.7" y1="162" x2="-86.8" y2="221.9"/><line x1="-98.7" y1="162" x2="38.4" y2="162"/><line x1="-98.7" y1="162" x2="39.8" y2="169.4"/><line x1="-86.8" y1="221.9" x2="-52.9" y2="272.7"/><line x1="-86.8" y1="221.9" x2="39.8" y2="169.4"/><line x1="-52.9" y1="272.7" x2="39.8" y2="169.4"/><line x1="-52.9" y1="272.7" x2="-2.1" y2="306.6"/><line x1="-52.9" y1="272.7" x2="44.1" y2="175.7"/><line x1="-52.9" y1="272.7" x2="50.4" y2="180"/><line x1="-2.1" y1="306.6" x2="57.8" y2="318.5"/><line x1="-2.1" y1="306.6" x2="50.4" y2="180"/><line x1="57.8" y1="318.5" x2="50.4" y2="180"/><line x1="57.8" y1="318.5" x2="117.7" y2="306.6"/><line x1="57.8" y1="318.5" x2="57.8" y2="181.4"/><line x1="57.8" y1="318.5" x2="65.2" y2="180"/><line x1="117.7" y1="306.6" x2="168.5" y2="272.7"/><line x1="117.7" y1="306.6" x2="65.2" y2="180"/><line x1="168.5" y1="272.7" x2="65.2" y2="180"/><line x1="168.5" y1="272.7" x2="202.4" y2="221.9"/><line x1="168.5" y1="272.7" x2="71.5" y2="175.7"/><line x1="168.5" y1="272.7" x2="75.8" y2="169.4"/><line x1="202.4" y1="221.9" x2="214.3" y2="162"/><line x1="202.4" y1="221.9" x2="75.8" y2="169.4"/><line x1="214.3" y1="162" x2="75.8" y2="169.4"/><line x1="77.2" y1="162" x2="75.8" y2="154.6"/><line x1="77.2" y1="162" x2="70.8" y2="162"/><line x1="75.8" y1="154.6" x2="70.8" y2="162"/><line x1="75.8" y1="154.6" x2="71.5" y2="148.3"/><line x1="75.8" y1="154.6" x2="69.8" y2="157"/><line x1="75.8" y1="154.6" x2="67" y2="152.8"/><line x1="71.5" y1="148.3" x2="65.2" y2="144"/><line x1="71.5" y1="148.3" x2="67" y2="152.8"/><line x1="65.2" y1="144" x2="67" y2="152.8"/><line x1="65.2" y1="144" x2="57.8" y2="142.6"/><line x1="65.2" y1="144" x2="62.8" y2="150"/><line x1="65.2" y1="144" x2="57.8" y2="149"/><line x1="57.8" y1="142.6" x2="50.4" y2="144"/><line x1="57.8" y1="142.6" x2="57.8" y2="149"/><line x1="50.4" y1="144" x2="57.8" y2="149"/><line x1="50.4" y1="144" x2="44.1" y2="148.3"/><line x1="50.4" y1="144" x2="52.8" y2="150"/><line x1="50.4" y1="144" x2="48.6" y2="152.8"/><line x1="44.1" y1="148.3" x2="39.8" y2="154.6"/><line x1="44.1" y1="148.3" x2="48.6" y2="152.8"/><line x1="39.8" y1="154.6" x2="48.6" y2="152.8"/><line x1="39.8" y1="154.6" x2="38.4" y2="162"/><line x1="39.8" y1="154.6" x2="45.8" y2="157"/><line x1="39.8" y1="154.6" x2="44.8" y2="162"/><line x1="38.4" y1="162" x2="39.8" y2="169.4"/><line x1="38.4" y1="162" x2="44.8" y2="162"/><line x1="39.8" y1="169.4" x2="44.8" y2="162"/><line x1="39.8" y1="169.4" x2="44.1" y2="175.7"/><line x1="39.8" y1="169.4" x2="45.8" y2="167"/><line x1="39.8" y1="169.4" x2="48.6" y2="171.2"/><line x1="44.1" y1="175.7" x2="50.4" y2="180"/><line x1="44.1" y1="175.7" x2="48.6" y2="171.2"/><line x1="50.4" y1="180" x2="48.6" y2="171.2"/><line x1="50.4" y1="180" x2="57.8" y2="181.4"/><line x1="50.4" y1="180" x2="52.8" y2="174"/><line x1="50.4" y1="180" x2="57.8" y2="175"/><line x1="57.8" y1="181.4" x2="65.2" y2="180"/><line x1="57.8" y1="181.4" x2="57.8" y2="175"/><line x1="65.2" y1="180" x2="57.8" y2="175"/><line x1="65.2" y1="180" x2="71.5" y2="175.7"/><line x1="65.2" y1="180" x2="62.8" y2="174"/><line x1="65.2" y1="180" x2="67" y2="171.2"/><line x1="71.5" y1="175.7" x2="75.8" y2="169.4"/><line x1="71.5" y1="175.7" x2="67" y2="171.2"/><line x1="75.8" y1="169.4" x2="67" y2="171.2"/><line x1="75.8" y1="169.4" x2="77.2" y2="162"/><line x1="75.8" y1="169.4" x2="69.8" y2="167"/><line x1="75.8" y1="169.4" x2="70.8" y2="162"/><line x1="70.8" y1="162" x2="69.8" y2="157"/><line x1="70.8" y1="162" x2="67" y2="162"/><line x1="70.8" y1="162" x2="66.3" y2="158.5"/><line x1="69.8" y1="157" x2="67" y2="152.8"/><line x1="69.8" y1="157" x2="66.3" y2="158.5"/><line x1="67" y1="152.8" x2="66.3" y2="158.5"/><line x1="67" y1="152.8" x2="62.8" y2="150"/><line x1="67" y1="152.8" x2="64.3" y2="155.5"/><line x1="67" y1="152.8" x2="61.3" y2="153.5"/><line x1="62.8" y1="150" x2="57.8" y2="149"/><line x1="62.8" y1="150" x2="61.3" y2="153.5"/><line x1="57.8" y1="149" x2="61.3" y2="153.5"/><line x1="57.8" y1="149" x2="52.8" y2="150"/><line x1="57.8" y1="149" x2="57.8" y2="152.8"/><line x1="57.8" y1="149" x2="54.3" y2="153.5"/><line x1="52.8" y1="150" x2="48.6" y2="152.8"/><line x1="52.8" y1="150" x2="54.3" y2="153.5"/><line x1="48.6" y1="152.8" x2="54.3" y2="153.5"/><line x1="48.6" y1="152.8" x2="45.8" y2="157"/><line x1="48.6" y1="152.8" x2="51.3" y2="155.5"/><line x1="48.6" y1="152.8" x2="49.3" y2="158.5"/><line x1="45.8" y1="157" x2="44.8" y2="162"/><line x1="45.8" y1="157" x2="49.3" y2="158.5"/><line x1="44.8" y1="162" x2="49.3" y2="158.5"/><line x1="44.8" y1="162" x2="45.8" y2="167"/><line x1="44.8" y1="162" x2="48.6" y2="162"/><line x1="44.8" y1="162" x2="49.3" y2="165.5"/><line x1="45.8" y1="167" x2="48.6" y2="171.2"/><line x1="45.8" y1="167" x2="49.3" y2="165.5"/><line x1="48.6" y1="171.2" x2="49.3" y2="165.5"/><line x1="48.6" y1="171.2" x2="52.8" y2="174"/><line x1="48.6" y1="171.2" x2="51.3" y2="168.5"/><line x1="48.6" y1="171.2" x2="54.3" y2="170.5"/><line x1="52.8" y1="174" x2="57.8" y2="175"/><line x1="52.8" y1="174" x2="54.3" y2="170.5"/><line x1="57.8" y1="175" x2="54.3" y2="170.5"/><line x1="57.8" y1="175" x2="62.8" y2="174"/><line x1="57.8" y1="175" x2="57.8" y2="171.2"/><line x1="57.8" y1="175" x2="61.3" y2="170.5"/><line x1="62.8" y1="174" x2="67" y2="171.2"/><line x1="62.8" y1="174" x2="61.3" y2="170.5"/><line x1="67" y1="171.2" x2="61.3" y2="170.5"/><line x1="67" y1="171.2" x2="69.8" y2="167"/><line x1="67" y1="171.2" x2="64.3" y2="168.5"/><line x1="67" y1="171.2" x2="66.3" y2="165.5"/><line x1="69.8" y1="167" x2="70.8" y2="162"/><line x1="69.8" y1="167" x2="66.3" y2="165.5"/><line x1="70.8" y1="162" x2="66.3" y2="165.5"/><line x1="67" y1="162" x2="66.3" y2="158.5"/><line x1="67" y1="162" x2="67" y2="162"/><line x1="66.3" y1="158.5" x2="67" y2="162"/><line x1="66.3" y1="158.5" x2="64.3" y2="155.5"/><line x1="66.3" y1="158.5" x2="66.3" y2="158.5"/><line x1="66.3" y1="158.5" x2="64.3" y2="155.5"/><line x1="64.3" y1="155.5" x2="61.3" y2="153.5"/><line x1="64.3" y1="155.5" x2="64.3" y2="155.5"/><line x1="61.3" y1="153.5" x2="64.3" y2="155.5"/><line x1="61.3" y1="153.5" x2="57.8" y2="152.8"/><line x1="61.3" y1="153.5" x2="61.3" y2="153.5"/><line x1="61.3" y1="153.5" x2="57.8" y2="152.8"/><line x1="57.8" y1="152.8" x2="54.3" y2="153.5"/><line x1="57.8" y1="152.8" x2="57.8" y2="152.8"/><line x1="54.3" y1="153.5" x2="57.8" y2="152.8"/><line x1="54.3" y1="153.5" x2="51.3" y2="155.5"/><line x1="54.3" y1="153.5" x2="54.3" y2="153.5"/><line x1="54.3" y1="153.5" x2="51.3" y2="155.5"/><line x1="51.3" y1="155.5" x2="49.3" y2="158.5"/><line x1="51.3" y1="155.5" x2="51.3" y2="155.5"/><line x1="49.3" y1="158.5" x2="51.3" y2="155.5"/><line x1="49.3" y1="158.5" x2="48.6" y2="162"/><line x1="49.3" y1="158.5" x2="49.3" y2="158.5"/><line x1="49.3" y1="158.5" x2="48.6" y2="162"/><line x1="48.6" y1="162" x2="49.3" y2="165.5"/><line x1="48.6" y1="162" x2="48.6" y2="162"/><line x1="49.3" y1="165.5" x2="48.6" y2="162"/><line x1="49.3" y1="165.5" x2="51.3" y2="168.5"/><line x1="49.3" y1="165.5" x2="49.3" y2="165.5"/><line x1="49.3" y1="165.5" x2="51.3" y2="168.5"/><line x1="51.3" y1="168.5" x2="54.3" y2="170.5"/><line x1="51.3" y1="168.5" x2="51.3" y2="168.5"/><line x1="54.3" y1="170.5" x2="51.3" y2="168.5"/><line x1="54.3" y1="170.5" x2="57.8" y2="171.2"/><line x1="54.3" y1="170.5" x2="54.3" y2="170.5"/><line x1="54.3" y1="170.5" x2="57.8" y2="171.2"/><line x1="57.8" y1="171.2" x2="61.3" y2="170.5"/><line x1="57.8" y1="171.2" x2="57.8" y2="171.2"/><line x1="61.3" y1="170.5" x2="57.8" y2="171.2"/><line x1="61.3" y1="170.5" x2="64.3" y2="168.5"/><line x1="61.3" y1="170.5" x2="61.3" y2="170.5"/><line x1="61.3" y1="170.5" x2="64.3" y2="168.5"/><line x1="64.3" y1="168.5" x2="66.3" y2="165.5"/><line x1="64.3" y1="168.5" x2="64.3" y2="168.5"/><line x1="66.3" y1="165.5" x2="64.3" y2="168.5"/><line x1="66.3" y1="165.5" x2="67" y2="162"/><line x1="66.3" y1="165.5" x2="66.3" y2="165.5"/><line x1="66.3" y1="165.5" x2="67" y2="162"/><line x1="67" y1="162" x2="66.3" y2="158.5"/><line x1="67" y1="162" x2="70.8" y2="162"/><line x1="67" y1="162" x2="69.8" y2="157"/><line x1="66.3" y1="158.5" x2="64.3" y2="155.5"/><line x1="66.3" y1="158.5" x2="69.8" y2="157"/><line x1="64.3" y1="155.5" x2="69.8" y2="157"/><line x1="64.3" y1="155.5" x2="61.3" y2="153.5"/><line x1="64.3" y1="155.5" x2="67" y2="152.8"/><line x1="64.3" y1="155.5" x2="62.8" y2="150"/><line x1="61.3" y1="153.5" x2="57.8" y2="152.8"/><line x1="61.3" y1="153.5" x2="62.8" y2="150"/><line x1="57.8" y1="152.8" x2="62.8" y2="150"/><line x1="57.8" y1="152.8" x2="54.3" y2="153.5"/><line x1="57.8" y1="152.8" x2="57.8" y2="149"/><line x1="57.8" y1="152.8" x2="52.8" y2="150"/><line x1="54.3" y1="153.5" x2="51.3" y2="155.5"/><line x1="54.3" y1="153.5" x2="52.8" y2="150"/><line x1="51.3" y1="155.5" x2="52.8" y2="150"/><line x1="51.3" y1="155.5" x2="49.3" y2="158.5"/><line x1="51.3" y1="155.5" x2="48.6" y2="152.8"/><line x1="51.3" y1="155.5" x2="45.8" y2="157"/><line x1="49.3" y1="158.5" x2="48.6" y2="162"/><line x1="49.3" y1="158.5" x2="45.8" y2="157"/><line x1="48.6" y1="162" x2="45.8" y2="157"/><line x1="48.6" y1="162" x2="49.3" y2="165.5"/><line x1="48.6" y1="162" x2="44.8" y2="162"/><line x1="48.6" y1="162" x2="45.8" y2="167"/><line x1="49.3" y1="165.5" x2="51.3" y2="168.5"/><line x1="49.3" y1="165.5" x2="45.8" y2="167"/><line x1="51.3" y1="168.5" x2="45.8" y2="167"/><line x1="51.3" y1="168.5" x2="54.3" y2="170.5"/><line x1="51.3" y1="168.5" x2="48.6" y2="171.2"/><line x1="51.3" y1="168.5" x2="52.8" y2="174"/><line x1="54.3" y1="170.5" x2="57.8" y2="171.2"/><line x1="54.3" y1="170.5" x2="52.8" y2="174"/><line x1="57.8" y1="171.2" x2="52.8" y2="174"/><line x1="57.8" y1="171.2" x2="61.3" y2="170.5"/><line x1="57.8" y1="171.2" x2="57.8" y2="175"/><line x1="57.8" y1="171.2" x2="62.8" y2="174"/><line x1="61.3" y1="170.5" x2="64.3" y2="168.5"/><line x1="61.3" y1="170.5" x2="62.8" y2="174"/><line x1="64.3" y1="168.5" x2="62.8" y2="174"/><line x1="64.3" y1="168.5" x2="66.3" y2="165.5"/><line x1="64.3" y1="168.5" x2="67" y2="171.2"/><line x1="64.3" y1="168.5" x2="69.8" y2="167"/><line x1="66.3" y1="165.5" x2="67" y2="162"/><line x1="66.3" y1="165.5" x2="69.8" y2="167"/><line x1="67" y1="162" x2="69.8" y2="167"/><line x1="70.8" y1="162" x2="69.8" y2="157"/><line x1="70.8" y1="162" x2="77.2" y2="162"/><line x1="69.8" y1="157" x2="77.2" y2="162"/><line x1="69.8" y1="157" x2="67" y2="152.8"/><line x1="69.8" y1="157" x2="75.8" y2="154.6"/><line x1="69.8" y1="157" x2="71.5" y2="148.3"/><line x1="67" y1="152.8" x2="62.8" y2="150"/><line x1="67" y1="152.8" x2="71.5" y2="148.3"/><line x1="62.8" y1="150" x2="71.5" y2="148.3"/><line x1="62.8" y1="150" x2="57.8" y2="149"/><line x1="62.8" y1="150" x2="65.2" y2="144"/><line x1="62.8" y1="150" x2="57.8" y2="142.6"/><line x1="57.8" y1="149" x2="52.8" y2="150"/><line x1="57.8" y1="149" x2="57.8" y2="142.6"/><line x1="52.8" y1="150" x2="57.8" y2="142.6"/><line x1="52.8" y1="150" x2="48.6" y2="152.8"/><line x1="52.8" y1="150" x2="50.4" y2="144"/><line x1="52.8" y1="150" x2="44.1" y2="148.3"/><line x1="48.6" y1="152.8" x2="45.8" y2="157"/><line x1="48.6" y1="152.8" x2="44.1" y2="148.3"/><line x1="45.8" y1="157" x2="44.1" y2="148.3"/><line x1="45.8" y1="157" x2="44.8" y2="162"/><line x1="45.8" y1="157" x2="39.8" y2="154.6"/><line x1="45.8" y1="157" x2="38.4" y2="162"/><line x1="44.8" y1="162" x2="45.8" y2="167"/><line x1="44.8" y1="162" x2="38.4" y2="162"/><line x1="45.8" y1="167" x2="38.4" y2="162"/><line x1="45.8" y1="167" x2="48.6" y2="171.2"/><line x1="45.8" y1="167" x2="39.8" y2="169.4"/><line x1="45.8" y1="167" x2="44.1" y2="175.7"/><line x1="48.6" y1="171.2" x2="52.8" y2="174"/><line x1="48.6" y1="171.2" x2="44.1" y2="175.7"/><line x1="52.8" y1="174" x2="44.1" y2="175.7"/><line x1="52.8" y1="174" x2="57.8" y2="175"/><line x1="52.8" y1="174" x2="50.4" y2="180"/><line x1="52.8" y1="174" x2="57.8" y2="181.4"/><line x1="57.8" y1="175" x2="62.8" y2="174"/><line x1="57.8" y1="175" x2="57.8" y2="181.4"/><line x1="62.8" y1="174" x2="57.8" y2="181.4"/><line x1="62.8" y1="174" x2="67" y2="171.2"/><line x1="62.8" y1="174" x2="65.2" y2="180"/><line x1="62.8" y1="174" x2="71.5" y2="175.7"/><line x1="67" y1="171.2" x2="69.8" y2="167"/><line x1="67" y1="171.2" x2="71.5" y2="175.7"/><line x1="69.8" y1="167" x2="71.5" y2="175.7"/><line x1="69.8" y1="167" x2="70.8" y2="162"/><line x1="69.8" y1="167" x2="75.8" y2="169.4"/><line x1="69.8" y1="167" x2="77.2" y2="162"/><line x1="77.2" y1="162" x2="75.8" y2="154.6"/><line x1="77.2" y1="162" x2="116.9" y2="162"/><line x1="77.2" y1="162" x2="112.4" y2="139.4"/><line x1="75.8" y1="154.6" x2="71.5" y2="148.3"/><line x1="75.8" y1="154.6" x2="112.4" y2="139.4"/><line x1="71.5" y1="148.3" x2="112.4" y2="139.4"/><line x1="71.5" y1="148.3" x2="65.2" y2="144"/><line x1="71.5" y1="148.3" x2="99.6" y2="120.2"/><line x1="71.5" y1="148.3" x2="80.4" y2="107.4"/><line x1="65.2" y1="144" x2="57.8" y2="142.6"/><line x1="65.2" y1="144" x2="80.4" y2="107.4"/><line x1="57.8" y1="142.6" x2="80.4" y2="107.4"/><line x1="57.8" y1="142.6" x2="50.4" y2="144"/><line x1="57.8" y1="142.6" x2="57.8" y2="102.9"/><line x1="57.8" y1="142.6" x2="35.2" y2="107.4"/><line x1="50.4" y1="144" x2="44.1" y2="148.3"/><line x1="50.4" y1="144" x2="35.2" y2="107.4"/><line x1="44.1" y1="148.3" x2="35.2" y2="107.4"/><line x1="44.1" y1="148.3" x2="39.8" y2="154.6"/><line x1="44.1" y1="148.3" x2="16" y2="120.2"/><line x1="44.1" y1="148.3" x2="3.2" y2="139.4"/><line x1="39.8" y1="154.6" x2="38.4" y2="162"/><line x1="39.8" y1="154.6" x2="3.2" y2="139.4"/><line x1="38.4" y1="162" x2="3.2" y2="139.4"/><line x1="38.4" y1="162" x2="39.8" y2="169.4"/><line x1="38.4" y1="162" x2="-1.3" y2="162"/><line x1="38.4" y1="162" x2="3.2" y2="184.6"/><line x1="39.8" y1="169.4" x2="44.1" y2="175.7"/><line x1="39.8" y1="169.4" x2="3.2" y2="184.6"/><line x1="44.1" y1="175.7" x2="3.2" y2="184.6"/><line x1="44.1" y1="175.7" x2="50.4" y2="180"/><line x1="44.1" y1="175.7" x2="16" y2="203.8"/><line x1="44.1" y1="175.7" x2="35.2" y2="216.6"/><line x1="50.4" y1="180" x2="57.8" y2="181.4"/><line x1="50.4" y1="180" x2="35.2" y2="216.6"/><line x1="57.8" y1="181.4" x2="35.2" y2="216.6"/><line x1="57.8" y1="181.4" x2="65.2" y2="180"/><line x1="57.8" y1="181.4" x2="57.8" y2="221.1"/><line x1="57.8" y1="181.4" x2="80.4" y2="216.6"/><line x1="65.2" y1="180" x2="71.5" y2="175.7"/><line x1="65.2" y1="180" x2="80.4" y2="216.6"/><line x1="71.5" y1="175.7" x2="80.4" y2="216.6"/><line x1="71.5" y1="175.7" x2="75.8" y2="169.4"/><line x1="71.5" y1="175.7" x2="99.6" y2="203.8"/><line x1="71.5" y1="175.7" x2="112.4" y2="184.6"/><line x1="75.8" y1="169.4" x2="77.2" y2="162"/><line x1="75.8" y1="169.4" x2="112.4" y2="184.6"/><line x1="77.2" y1="162" x2="112.4" y2="184.6"/><line x1="116.9" y1="162" x2="112.4" y2="139.4"/><line x1="116.9" y1="162" x2="153.7" y2="162"/><line x1="112.4" y1="139.4" x2="153.7" y2="162"/><line x1="112.4" y1="139.4" x2="99.6" y2="120.2"/><line x1="112.4" y1="139.4" x2="146.4" y2="125.3"/><line x1="112.4" y1="139.4" x2="125.6" y2="94.2"/><line x1="99.6" y1="120.2" x2="80.4" y2="107.4"/><line x1="99.6" y1="120.2" x2="125.6" y2="94.2"/><line x1="80.4" y1="107.4" x2="125.6" y2="94.2"/><line x1="80.4" y1="107.4" x2="57.8" y2="102.9"/><line x1="80.4" y1="107.4" x2="94.5" y2="73.4"/><line x1="80.4" y1="107.4" x2="57.8" y2="66.1"/><line x1="57.8" y1="102.9" x2="35.2" y2="107.4"/><line x1="57.8" y1="102.9" x2="57.8" y2="66.1"/><line x1="35.2" y1="107.4" x2="57.8" y2="66.1"/><line x1="35.2" y1="107.4" x2="16" y2="120.2"/><line x1="35.2" y1="107.4" x2="21.1" y2="73.4"/><line x1="35.2" y1="107.4" x2="-10" y2="94.2"/><line x1="16" y1="120.2" x2="3.2" y2="139.4"/><line x1="16" y1="120.2" x2="-10" y2="94.2"/><line x1="3.2" y1="139.4" x2="-10" y2="94.2"/><line x1="3.2" y1="139.4" x2="-1.3" y2="162"/><line x1="3.2" y1="139.4" x2="-30.8" y2="125.3"/><line x1="3.2" y1="139.4" x2="-38.1" y2="162"/><line x1="-1.3" y1="162" x2="3.2" y2="184.6"/><line x1="-1.3" y1="162" x2="-38.1" y2="162"/><line x1="3.2" y1="184.6" x2="-38.1" y2="162"/><line x1="3.2" y1="184.6" x2="16" y2="203.8"/><line x1="3.2" y1="184.6" x2="-30.8" y2="198.7"/><line x1="3.2" y1="184.6" x2="-10" y2="229.8"/><line x1="16" y1="203.8" x2="35.2" y2="216.6"/><line x1="16" y1="203.8" x2="-10" y2="229.8"/><line x1="35.2" y1="216.6" x2="-10" y2="229.8"/><line x1="35.2" y1="216.6" x2="57.8" y2="221.1"/><line x1="35.2" y1="216.6" x2="21.1" y2="250.6"/><line x1="35.2" y1="216.6" x2="57.8" y2="257.9"/><line x1="57.8" y1="221.1" x2="80.4" y2="216.6"/><line x1="57.8" y1="221.1" x2="57.8" y2="257.9"/><line x1="80.4" y1="216.6" x2="57.8" y2="257.9"/><line x1="80.4" y1="216.6" x2="99.6" y2="203.8"/><line x1="80.4" y1="216.6" x2="94.5" y2="250.6"/><line x1="80.4" y1="216.6" x2="125.6" y2="229.8"/><line x1="99.6" y1="203.8" x2="112.4" y2="184.6"/><line x1="99.6" y1="203.8" x2="125.6" y2="229.8"/><line x1="112.4" y1="184.6" x2="125.6" y2="229.8"/><line x1="112.4" y1="184.6" x2="116.9" y2="162"/><line x1="112.4" y1="184.6" x2="146.4" y2="198.7"/><line x1="112.4" y1="184.6" x2="153.7" y2="162"/><line x1="153.7" y1="162" x2="146.4" y2="125.3"/><line x1="153.7" y1="162" x2="175.4" y2="162"/><line x1="153.7" y1="162" x2="166.5" y2="117"/><line x1="146.4" y1="125.3" x2="125.6" y2="94.2"/><line x1="146.4" y1="125.3" x2="166.5" y2="117"/><line x1="125.6" y1="94.2" x2="166.5" y2="117"/><line x1="125.6" y1="94.2" x2="94.5" y2="73.4"/><line x1="125.6" y1="94.2" x2="141" y2="78.8"/><line x1="125.6" y1="94.2" x2="102.8" y2="53.3"/><line x1="94.5" y1="73.4" x2="57.8" y2="66.1"/><line x1="94.5" y1="73.4" x2="102.8" y2="53.3"/><line x1="57.8" y1="66.1" x2="102.8" y2="53.3"/><line x1="57.8" y1="66.1" x2="21.1" y2="73.4"/><line x1="57.8" y1="66.1" x2="57.8" y2="44.4"/><line x1="57.8" y1="66.1" x2="12.8" y2="53.3"/><line x1="21.1" y1="73.4" x2="-10" y2="94.2"/><line x1="21.1" y1="73.4" x2="12.8" y2="53.3"/><line x1="-10" y1="94.2" x2="12.8" y2="53.3"/><line x1="-10" y1="94.2" x2="-30.8" y2="125.3"/><line x1="-10" y1="94.2" x2="-25.4" y2="78.8"/><line x1="-10" y1="94.2" x2="-50.9" y2="117"/><line x1="-30.8" y1="125.3" x2="-38.1" y2="162"/><line x1="-30.8" y1="125.3" x2="-50.9" y2="117"/><line x1="-38.1" y1="162" x2="-50.9" y2="117"/><line x1="-38.1" y1="162" x2="-30.8" y2="198.7"/><line x1="-38.1" y1="162" x2="-59.8" y2="162"/><line x1="-38.1" y1="162" x2="-50.9" y2="207"/><line x1="-30.8" y1="198.7" x2="-10" y2="229.8"/><line x1="-30.8" y1="198.7" x2="-50.9" y2="207"/><line x1="-10" y1="229.8" x2="-50.9" y2="207"/><line x1="-10" y1="229.8" x2="21.1" y2="250.6"/><line x1="-10" y1="229.8" x2="-25.4" y2="245.2"/><line x1="-10" y1="229.8" x2="12.8" y2="270.7"/><line x1="21.1" y1="250.6" x2="57.8" y2="257.9"/><line x1="21.1" y1="250.6" x2="12.8" y2="270.7"/><line x1="57.8" y1="257.9" x2="12.8" y2="270.7"/><line x1="57.8" y1="257.9" x2="94.5" y2="250.6"/><line x1="57.8" y1="257.9" x2="57.8" y2="279.6"/><line x1="57.8" y1="257.9" x2="102.8" y2="270.7"/><line x1="94.5" y1="250.6" x2="125.6" y2="229.8"/><line x1="94.5" y1="250.6" x2="102.8" y2="270.7"/><line x1="125.6" y1="229.8" x2="102.8" y2="270.7"/><line x1="125.6" y1="229.8" x2="146.4" y2="198.7"/><line x1="125.6" y1="229.8" x2="141" y2="245.2"/><line x1="125.6" y1="229.8" x2="166.5" y2="207"/><line x1="146.4" y1="198.7" x2="153.7" y2="162"/><line x1="146.4" y1="198.7" x2="166.5" y2="207"/><line x1="153.7" y1="162" x2="166.5" y2="207"/><line x1="175.4" y1="162" x2="166.5" y2="117"/><line x1="166.5" y1="117" x2="141" y2="78.8"/><line x1="141" y1="78.8" x2="102.8" y2="53.3"/><line x1="102.8" y1="53.3" x2="57.8" y2="44.4"/><line x1="57.8" y1="44.4" x2="12.8" y2="53.3"/><line x1="12.8" y1="53.3" x2="-25.4" y2="78.8"/><line x1="-25.4" y1="78.8" x2="-50.9" y2="117"/><line x1="-50.9" y1="117" x2="-59.8" y2="162"/><line x1="-59.8" y1="162" x2="-50.9" y2="207"/><line x1="-50.9" y1="207" x2="-25.4" y2="245.2"/><line x1="-25.4" y1="245.2" x2="12.8" y2="270.7"/><line x1="12.8" y1="270.7" x2="57.8" y2="279.6"/><line x1="57.8" y1="279.6" x2="102.8" y2="270.7"/><line x1="102.8" y1="270.7" x2="141" y2="245.2"/><line x1="141" y1="245.2" x2="166.5" y2="207"/><line x1="166.5" y1="207" x2="175.4" y2="162"/><line x1="175.4" y1="162" x2="57.8" y2="162"/><line x1="166.5" y1="117" x2="57.8" y2="162"/><line x1="141" y1="78.8" x2="57.8" y2="162"/><line x1="102.8" y1="53.3" x2="57.8" y2="162"/><line x1="57.8" y1="44.4" x2="57.8" y2="162"/><line x1="12.8" y1="53.3" x2="57.8" y2="162"/><line x1="-25.4" y1="78.8" x2="57.8" y2="162"/><line x1="-50.9" y1="117" x2="57.8" y2="162"/><line x1="-59.8" y1="162" x2="57.8" y2="162"/><line x1="-50.9" y1="207" x2="57.8" y2="162"/><line x1="-25.4" y1="245.2" x2="57.8" y2="162"/><line x1="12.8" y1="270.7" x2="57.8" y2="162"/><line x1="57.8" y1="279.6" x2="57.8" y2="162"/><line x1="102.8" y1="270.7" x2="57.8" y2="162"/><line x1="141" y1="245.2" x2="57.8" y2="162"/><line x1="166.5" y1="207" x2="57.8" y2="162"/></g><g fill="#ffffff"><rect x="69.3" y="160.5" width="3" height="3"/><rect x="68.3" y="155.5" width="3" height="3"/><rect x="65.5" y="151.3" width="3" height="3"/><rect x="61.3" y="148.5" width="3" height="3"/><rect x="56.3" y="147.5" width="3" height="3"/><rect x="51.3" y="148.5" width="3" height="3"/><rect x="47.1" y="151.3" width="3" height="3"/><rect x="44.3" y="155.5" width="3" height="3"/><rect x="43.3" y="160.5" width="3" height="3"/><rect x="44.3" y="165.5" width="3" height="3"/><rect x="47.1" y="169.7" width="3" height="3"/><rect x="51.3" y="172.5" width="3" height="3"/><rect x="56.3" y="173.5" width="3" height="3"/><rect x="61.3" y="172.5" width="3" height="3"/><rect x="65.5" y="169.7" width="3" height="3"/><rect x="68.3" y="165.5" width="3" height="3"/><rect x="65.5" y="160.5" width="3" height="3"/><rect x="64.8" y="157" width="3" height="3"/><rect x="62.8" y="154" width="3" height="3"/><rect x="59.8" y="152" width="3" height="3"/><rect x="56.3" y="151.3" width="3" height="3"/><rect x="52.8" y="152" width="3" height="3"/><rect x="49.8" y="154" width="3" height="3"/><rect x="47.8" y="157" width="3" height="3"/><rect x="47.1" y="160.5" width="3" height="3"/><rect x="47.8" y="164" width="3" height="3"/><rect x="49.8" y="167" width="3" height="3"/><rect x="52.8" y="169" width="3" height="3"/><rect x="56.3" y="169.7" width="3" height="3"/><rect x="59.8" y="169" width="3" height="3"/><rect x="62.8" y="167" width="3" height="3"/><rect x="64.8" y="164" width="3" height="3"/><rect x="75.7" y="160.5" width="3" height="3"/><rect x="74.3" y="153.1" width="3" height="3"/><rect x="70" y="146.8" width="3" height="3"/><rect x="63.7" y="142.5" width="3" height="3"/><rect x="56.3" y="141.1" width="3" height="3"/><rect x="48.9" y="142.5" width="3" height="3"/><rect x="42.6" y="146.8" width="3" height="3"/><rect x="38.3" y="153.1" width="3" height="3"/><rect x="36.9" y="160.5" width="3" height="3"/><rect x="38.3" y="167.9" width="3" height="3"/><rect x="42.6" y="174.2" width="3" height="3"/><rect x="48.9" y="178.5" width="3" height="3"/><rect x="56.3" y="179.9" width="3" height="3"/><rect x="63.7" y="178.5" width="3" height="3"/><rect x="70" y="174.2" width="3" height="3"/><rect x="74.3" y="167.9" width="3" height="3"/><rect x="115.4" y="160.5" width="3" height="3"/><rect x="110.9" y="137.9" width="3" height="3"/><rect x="98.1" y="118.7" width="3" height="3"/><rect x="78.9" y="105.9" width="3" height="3"/><rect x="56.3" y="101.4" width="3" height="3"/><rect x="33.7" y="105.9" width="3" height="3"/><rect x="14.5" y="118.7" width="3" height="3"/><rect x="1.7" y="137.9" width="3" height="3"/><rect x="-2.8" y="160.5" width="3" height="3"/><rect x="1.7" y="183.1" width="3" height="3"/><rect x="14.5" y="202.3" width="3" height="3"/><rect x="33.7" y="215.1" width="3" height="3"/><rect x="56.3" y="219.6" width="3" height="3"/><rect x="78.9" y="215.1" width="3" height="3"/><rect x="98.1" y="202.3" width="3" height="3"/><rect x="110.9" y="183.1" width="3" height="3"/><rect x="152.2" y="160.5" width="3" height="3"/><rect x="144.9" y="123.8" width="3" height="3"/><rect x="124.1" y="92.7" width="3" height="3"/><rect x="93" y="71.9" width="3" height="3"/><rect x="56.3" y="64.6" width="3" height="3"/><rect x="19.6" y="71.9" width="3" height="3"/><rect x="-11.5" y="92.7" width="3" height="3"/><rect x="-32.3" y="123.8" width="3" height="3"/><rect x="-39.6" y="160.5" width="3" height="3"/><rect x="-32.3" y="197.2" width="3" height="3"/><rect x="-11.5" y="228.3" width="3" height="3"/><rect x="19.6" y="249.1" width="3" height="3"/><rect x="56.3" y="256.4" width="3" height="3"/><rect x="93" y="249.1" width="3" height="3"/><rect x="124.1" y="228.3" width="3" height="3"/><rect x="144.9" y="197.2" width="3" height="3"/><rect x="173.9" y="160.5" width="3" height="3"/><rect x="165" y="115.5" width="3" height="3"/><rect x="139.5" y="77.3" width="3" height="3"/><rect x="101.3" y="51.8" width="3" height="3"/><rect x="56.3" y="42.9" width="3" height="3"/><rect x="11.3" y="51.8" width="3" height="3"/><rect x="-26.9" y="77.3" width="3" height="3"/><rect x="-52.4" y="115.5" width="3" height="3"/><rect x="-61.3" y="160.5" width="3" height="3"/><rect x="-52.4" y="205.5" width="3" height="3"/><rect x="-26.9" y="243.7" width="3" height="3"/><rect x="11.3" y="269.2" width="3" height="3"/><rect x="56.3" y="278.1" width="3" height="3"/><rect x="101.3" y="269.2" width="3" height="3"/><rect x="139.5" y="243.7" width="3" height="3"/><rect x="165" y="205.5" width="3" height="3"/></g><g fill="#7a0000" stroke="#c83a3a" stroke-width="0.6"><rect x="213.1" y="160.8" width="2.4" height="2.4"/><rect x="201.2" y="100.9" width="2.4" height="2.4"/><rect x="167.3" y="50.1" width="2.4" height="2.4"/><rect x="116.5" y="16.2" width="2.4" height="2.4"/><rect x="56.6" y="4.3" width="2.4" height="2.4"/><rect x="-3.3" y="16.2" width="2.4" height="2.4"/><rect x="-54.1" y="50.1" width="2.4" height="2.4"/><rect x="-88" y="100.9" width="2.4" height="2.4"/><rect x="-99.9" y="160.8" width="2.4" height="2.4"/><rect x="-88" y="220.7" width="2.4" height="2.4"/><rect x="-54.1" y="271.5" width="2.4" height="2.4"/><rect x="-3.3" y="305.4" width="2.4" height="2.4"/><rect x="56.6" y="317.3" width="2.4" height="2.4"/><rect x="116.5" y="305.4" width="2.4" height="2.4"/><rect x="167.3" y="271.5" width="2.4" height="2.4"/><rect x="201.2" y="220.7" width="2.4" height="2.4"/><rect x="76" y="160.8" width="2.4" height="2.4"/><rect x="74.6" y="153.4" width="2.4" height="2.4"/><rect x="70.3" y="147.1" width="2.4" height="2.4"/><rect x="64" y="142.8" width="2.4" height="2.4"/><rect x="56.6" y="141.4" width="2.4" height="2.4"/><rect x="49.2" y="142.8" width="2.4" height="2.4"/><rect x="42.9" y="147.1" width="2.4" height="2.4"/><rect x="38.6" y="153.4" width="2.4" height="2.4"/><rect x="37.2" y="160.8" width="2.4" height="2.4"/><rect x="38.6" y="168.2" width="2.4" height="2.4"/><rect x="42.9" y="174.5" width="2.4" height="2.4"/><rect x="49.2" y="178.8" width="2.4" height="2.4"/><rect x="56.6" y="180.2" width="2.4" height="2.4"/><rect x="64" y="178.8" width="2.4" height="2.4"/><rect x="70.3" y="174.5" width="2.4" height="2.4"/><rect x="74.6" y="168.2" width="2.4" height="2.4"/><rect x="56.6" y="160.8" width="2.4" height="2.4"/></g><g fill="#9a1010"></g></svg>
</div>
<!-- viewport BR -->
<div class="vp" style="left:260px;top:336px;width:398px;height:319px;background:#3480b3">
<svg width="398" height="319">
<g stroke="#707479" stroke-width="1"><line x1="-15743.8" y1="476.9" x2="-209082.1" y2="6171.3"/><line x1="-15743.8" y1="476.9" x2="75.7" y2="67.9"/><line x1="-6712.9" y1="243.4" x2="-174836" y2="6171.3"/><line x1="-113771.7" y1="3364.1" x2="130.4" y2="68.9"/><line x1="-4032.6" y1="174.1" x2="-140589.9" y2="6171.3"/><line x1="-185645.5" y1="6171.3" x2="190.2" y2="69.9"/><line x1="-2746.7" y1="140.9" x2="-106343.8" y2="6171.3"/><line x1="-160489.3" y1="6171.3" x2="256.1" y2="71.1"/><line x1="-1991.8" y1="121.3" x2="-72097.7" y2="6171.3"/><line x1="-135333" y1="6171.3" x2="328.9" y2="72.4"/><line x1="-1495.2" y1="108.5" x2="-37851.5" y2="6171.3"/><line x1="-110176.7" y1="6171.3" x2="409.8" y2="73.9"/><line x1="-1143.7" y1="99.4" x2="-3605.4" y2="6171.3"/><line x1="-85020.5" y1="6171.3" x2="500.3" y2="75.5"/><line x1="-881.9" y1="92.6" x2="30640.7" y2="6171.3"/><line x1="-59864.2" y1="6171.3" x2="602.1" y2="77.4"/><line x1="-517.7" y1="83.2" x2="99132.9" y2="6171.3"/><line x1="-9551.6" y1="6171.3" x2="849.7" y2="81.8"/><line x1="-386" y1="79.8" x2="133379" y2="6171.3"/><line x1="15604.6" y1="6171.3" x2="1002.2" y2="84.6"/><line x1="-276.6" y1="77" x2="108971.1" y2="4042.3"/><line x1="40760.9" y1="6171.3" x2="1180.2" y2="87.8"/><line x1="-184.2" y1="74.6" x2="9921.1" y2="379.5"/><line x1="65917.2" y1="6171.3" x2="1390.9" y2="91.6"/><line x1="-105.1" y1="72.6" x2="5611.7" y2="220.2"/><line x1="91073.4" y1="6171.3" x2="1644" y2="96.1"/><line x1="-36.7" y1="70.8" x2="4090.7" y2="163.9"/><line x1="116229.7" y1="6171.3" x2="1953.7" y2="101.7"/><line x1="23.1" y1="69.2" x2="3313.3" y2="135.2"/><line x1="141386" y1="6171.3" x2="2341.5" y2="108.7"/><line x1="75.7" y1="67.9" x2="2841.3" y2="117.7"/><line x1="166542.3" y1="6171.3" x2="2841.3" y2="117.7"/><line x1="-34707.9" y1="6171.3" x2="198" y2="168.8"/><line x1="-679.2" y1="87.4" x2="198" y2="168.8"/></g>
<line x1="198" y1="168.8" x2="717.6" y2="79.4" stroke="#c8f070" stroke-width="1.2"/>
<line x1="198" y1="168.8" x2="64886.8" y2="6171.3" stroke="#8a3fd8" stroke-width="1.6"/>
<line x1="198.4" y1="0" x2="198.4" y2="52" stroke="#20d8f0" stroke-width="1.6"/>
<polygon points="213.6,166.1 215.4,166.3 217.1,166.5 218.7,166.7 220.1,166.9 221.3,167.2 222.4,167.4 223.3,167.7 224,168 224.5,168.3 224.9,168.6 225,168.9 224.9,169.2 224.6,169.5 224.1,169.8 223.4,170 222.5,170.3 221.4,170.6 220.1,170.9 218.6,171.1 217,171.3 215.2,171.5 213.3,171.7 211.3,171.9 209.1,172 206.9,172.1 204.6,172.2 202.2,172.3 199.8,172.3 197.4,172.3 195,172.3 192.6,172.2 190.2,172.2 187.9,172.1 185.7,171.9 183.7,171.8 181.7,171.6 179.8,171.4 178.1,171.2 176.6,171 175.2,170.7 174,170.5 173,170.2 172.2,169.9 171.6,169.6 171.2,169.3 171,169 171.1,168.7 171.3,168.4 171.7,168.1 172.3,167.9 173.1,167.6 174.1,167.3 175.3,167.1 176.6,166.8 178.1,166.6 179.7,166.4 181.5,166.2 183.4,166 185.4,165.9 187.4,165.8 189.6,165.7 191.8,165.6 194,165.5 196.3,165.5 198.6,165.5 200.9,165.5 203.1,165.5 205.4,165.6 207.5,165.7 209.7,165.8 211.7,166" fill="#2a2a2a" stroke="#222" stroke-width="0.8"/><polygon points="195.8,163.4 196.2,163.4 192.6,163.6 191.5,163.7" fill="#282828" stroke="#282828" stroke-width="0.5"/><polygon points="200,163.4 200.3,163.4 205,163.7 204,163.6" fill="#282828" stroke="#282828" stroke-width="0.5"/><polygon points="195.5,163.5 195.8,163.4 191.5,163.7 190.5,163.8" fill="#282828" stroke="#282828" stroke-width="0.5"/><polygon points="200.3,163.4 200.7,163.5 206,163.8 205,163.7" fill="#282828" stroke="#282828" stroke-width="0.5"/><polygon points="195.2,163.5 195.5,163.5 190.5,163.8 189.5,163.8" fill="#282828" stroke="#282828" stroke-width="0.5"/><polygon points="200.7,163.5 201,163.5 206.9,163.9 206,163.8" fill="#282828" stroke="#282828" stroke-width="0.5"/><polygon points="194.9,163.5 195.2,163.5 189.5,163.8 188.6,163.9" fill="#282828" stroke="#282828" stroke-width="0.5"/><polygon points="201,163.5 201.2,163.5 207.8,164 206.9,163.9" fill="#282828" stroke="#282828" stroke-width="0.5"/><polygon points="194.6,163.6 194.9,163.5 188.6,163.9 187.8,164" fill="#282828" stroke="#282828" stroke-width="0.5"/><polygon points="201.2,163.5 201.5,163.6 208.6,164.1 207.8,164" fill="#282828" stroke="#282828" stroke-width="0.5"/><polygon points="194.4,163.6 194.6,163.6 187.8,164 187.1,164.1" fill="#282828" stroke="#282828" stroke-width="0.5"/><polygon points="201.5,163.6 201.7,163.6 209.3,164.2 208.6,164.1" fill="#282828" stroke="#282828" stroke-width="0.5"/><polygon points="194.2,163.6 194.4,163.6 187.1,164.1 186.4,164.3" fill="#282828" stroke="#282828" stroke-width="0.5"/><polygon points="201.7,163.6 201.9,163.6 209.9,164.3 209.3,164.2" fill="#282828" stroke="#282828" stroke-width="0.5"/><polygon points="194,163.7 194.2,163.6 186.4,164.3 185.8,164.4" fill="#282828" stroke="#282828" stroke-width="0.5"/><polygon points="201.9,163.6 202.1,163.7 210.5,164.5 209.9,164.3" fill="#282828" stroke="#282828" stroke-width="0.5"/><polygon points="193.8,163.7 194,163.7 185.8,164.4 185.3,164.5" fill="#282828" stroke="#282828" stroke-width="0.5"/><polygon points="202.1,163.7 202.3,163.7 210.9,164.6 210.5,164.5" fill="#2a2a2a" stroke="#2a2a2a" stroke-width="0.5"/><polygon points="193.7,163.8 193.8,163.7 185.3,164.5 184.9,164.7" fill="#282828" stroke="#282828" stroke-width="0.5"/><polygon points="202.3,163.7 202.4,163.8 211.3,164.7 210.9,164.6" fill="#323232" stroke="#323232" stroke-width="0.5"/><polygon points="193.6,163.8 193.7,163.8 184.9,164.7 184.6,164.8" fill="#282828" stroke="#282828" stroke-width="0.5"/><polygon points="202.4,163.8 202.5,163.8 211.5,164.9 211.3,164.7" fill="#393939" stroke="#393939" stroke-width="0.5"/><polygon points="193.5,163.9 193.6,163.8 184.6,164.8 184.4,164.9" fill="#282828" stroke="#282828" stroke-width="0.5"/><polygon points="202.5,163.8 202.5,163.9 211.7,165 211.5,164.9" fill="#3f3f3f" stroke="#3f3f3f" stroke-width="0.5"/><polygon points="193.5,163.9 193.5,163.9 184.4,164.9 184.3,165.1" fill="#282828" stroke="#282828" stroke-width="0.5"/><polygon points="202.5,163.9 202.5,163.9 211.7,165.2 211.7,165" fill="#464646" stroke="#464646" stroke-width="0.5"/><polygon points="193.5,163.9 193.5,163.9 184.3,165.1 184.3,165.2" fill="#282828" stroke="#282828" stroke-width="0.5"/><polygon points="202.5,163.9 202.5,164 211.6,165.3 211.7,165.2" fill="#4b4b4b" stroke="#4b4b4b" stroke-width="0.5"/><polygon points="193.5,164 193.5,163.9 184.3,165.2 184.4,165.4" fill="#282828" stroke="#282828" stroke-width="0.5"/><polygon points="202.5,164 202.4,164 211.5,165.5 211.6,165.3" fill="#515151" stroke="#515151" stroke-width="0.5"/><polygon points="193.6,164 193.5,164 184.4,165.4 184.6,165.5" fill="#282828" stroke="#282828" stroke-width="0.5"/><polygon points="202.4,164 202.3,164.1 211.2,165.6 211.5,165.5" fill="#565656" stroke="#565656" stroke-width="0.5"/><polygon points="193.7,164.1 193.6,164 184.6,165.5 185,165.7" fill="#282828" stroke="#282828" stroke-width="0.5"/><polygon points="202.3,164.1 202.2,164.1 210.8,165.7 211.2,165.6" fill="#5b5b5b" stroke="#5b5b5b" stroke-width="0.5"/><polygon points="193.9,164.1 193.7,164.1 185,165.7 185.4,165.8" fill="#282828" stroke="#282828" stroke-width="0.5"/><polygon points="202.2,164.1 202,164.2 210.4,165.9 210.8,165.7" fill="#606060" stroke="#606060" stroke-width="0.5"/><polygon points="194,164.2 193.9,164.1 185.4,165.8 185.9,165.9" fill="#2f2f2f" stroke="#2f2f2f" stroke-width="0.5"/><polygon points="202,164.2 201.9,164.2 209.8,166 210.4,165.9" fill="#646464" stroke="#646464" stroke-width="0.5"/><polygon points="194.2,164.2 194,164.2 185.9,165.9 186.5,166.1" fill="#363636" stroke="#363636" stroke-width="0.5"/><polygon points="201.9,164.2 201.6,164.2 209.1,166.1 209.8,166" fill="#676767" stroke="#676767" stroke-width="0.5"/><polygon points="194.5,164.3 194.2,164.2 186.5,166.1 187.2,166.2" fill="#3d3d3d" stroke="#3d3d3d" stroke-width="0.5"/><polygon points="201.6,164.2 201.4,164.3 208.4,166.3 209.1,166.1" fill="#6a6a6a" stroke="#6a6a6a" stroke-width="0.5"/><polygon points="194.7,164.3 194.5,164.3 187.2,166.2 188,166.3" fill="#444444" stroke="#444444" stroke-width="0.5"/><polygon points="201.4,164.3 201.1,164.3 207.6,166.4 208.4,166.3" fill="#6d6d6d" stroke="#6d6d6d" stroke-width="0.5"/><polygon points="195,164.3 194.7,164.3 188,166.3 188.9,166.4" fill="#4a4a4a" stroke="#4a4a4a" stroke-width="0.5"/><polygon points="201.1,164.3 200.8,164.3 206.7,166.5 207.6,166.4" fill="#6f6f6f" stroke="#6f6f6f" stroke-width="0.5"/><polygon points="195.3,164.4 195,164.3 188.9,166.4 189.8,166.5" fill="#4f4f4f" stroke="#4f4f4f" stroke-width="0.5"/><polygon points="200.8,164.3 200.5,164.4 205.7,166.5 206.7,166.5" fill="#717171" stroke="#717171" stroke-width="0.5"/><polygon points="195.6,164.4 195.3,164.4 189.8,166.5 190.8,166.6" fill="#555555" stroke="#555555" stroke-width="0.5"/><polygon points="200.5,164.4 200.2,164.4 204.7,166.6 205.7,166.5" fill="#727272" stroke="#727272" stroke-width="0.5"/><polygon points="196,164.4 195.6,164.4 190.8,166.6 191.9,166.7" fill="#5a5a5a" stroke="#5a5a5a" stroke-width="0.5"/><polygon points="200.2,164.4 199.8,164.4 203.6,166.7 204.7,166.6" fill="#737373" stroke="#737373" stroke-width="0.5"/><polygon points="196.4,164.4 196,164.4 191.9,166.7 193,166.7" fill="#5e5e5e" stroke="#5e5e5e" stroke-width="0.5"/><polygon points="199.8,164.4 199.5,164.4 202.5,166.7 203.6,166.7" fill="#737373" stroke="#737373" stroke-width="0.5"/><polygon points="196.7,164.4 196.4,164.4 193,166.7 194.1,166.8" fill="#626262" stroke="#626262" stroke-width="0.5"/><polygon points="199.5,164.4 199.1,164.4 201.3,166.8 202.5,166.7" fill="#737373" stroke="#737373" stroke-width="0.5"/><polygon points="197.1,164.4 196.7,164.4 194.1,166.8 195.3,166.8" fill="#666666" stroke="#666666" stroke-width="0.5"/><polygon points="199.1,164.4 198.7,164.5 200.1,166.8 201.3,166.8" fill="#727272" stroke="#727272" stroke-width="0.5"/><polygon points="197.5,164.5 197.1,164.4 195.3,166.8 196.5,166.8" fill="#696969" stroke="#696969" stroke-width="0.5"/><polygon points="198.7,164.5 198.3,164.5 198.9,166.8 200.1,166.8" fill="#707070" stroke="#707070" stroke-width="0.5"/><polygon points="197.9,164.5 197.5,164.5 196.5,166.8 197.7,166.8" fill="#6c6c6c" stroke="#6c6c6c" stroke-width="0.5"/><polygon points="198.3,164.5 197.9,164.5 197.7,166.8 198.9,166.8" fill="#6f6f6f" stroke="#6f6f6f" stroke-width="0.5"/><polygon points="208.6,164.1 209.3,164.2 216.3,165.3 215.1,165.1" fill="#282828" stroke="#282828" stroke-width="0.5"/><polygon points="186.4,164.3 187.1,164.1 180.3,165.2 179.2,165.4" fill="#282828" stroke="#282828" stroke-width="0.5"/><polygon points="209.3,164.2 209.9,164.3 217.3,165.5 216.3,165.3" fill="#282828" stroke="#282828" stroke-width="0.5"/><polygon points="185.8,164.4 186.4,164.3 179.2,165.4 178.3,165.6" fill="#282828" stroke="#282828" stroke-width="0.5"/><polygon points="209.9,164.3 210.5,164.5 218.2,165.7 217.3,165.5" fill="#282828" stroke="#282828" stroke-width="0.5"/><polygon points="185.3,164.5 185.8,164.4 178.3,165.6 177.5,165.8" fill="#282828" stroke="#282828" stroke-width="0.5"/><polygon points="210.5,164.5 210.9,164.6 218.9,166 218.2,165.7" fill="#2a2a2a" stroke="#2a2a2a" stroke-width="0.5"/><polygon points="184.9,164.7 185.3,164.5 177.5,165.8 176.8,166.1" fill="#282828" stroke="#282828" stroke-width="0.5"/><polygon points="210.9,164.6 211.3,164.7 219.5,166.2 218.9,166" fill="#323232" stroke="#323232" stroke-width="0.5"/><polygon points="184.6,164.8 184.9,164.7 176.8,166.1 176.3,166.3" fill="#282828" stroke="#282828" stroke-width="0.5"/><polygon points="211.3,164.7 211.5,164.9 219.9,166.4 219.5,166.2" fill="#393939" stroke="#393939" stroke-width="0.5"/><polygon points="184.4,164.9 184.6,164.8 176.3,166.3 176,166.5" fill="#282828" stroke="#282828" stroke-width="0.5"/><polygon points="211.5,164.9 211.7,165 220.1,166.7 219.9,166.4" fill="#3f3f3f" stroke="#3f3f3f" stroke-width="0.5"/><polygon points="184.3,165.1 184.4,164.9 176,166.5 175.8,166.8" fill="#282828" stroke="#282828" stroke-width="0.5"/><polygon points="211.7,165 211.7,165.2 220.2,166.9 220.1,166.7" fill="#464646" stroke="#464646" stroke-width="0.5"/><polygon points="184.3,165.2 184.3,165.1 175.8,166.8 175.8,167" fill="#282828" stroke="#282828" stroke-width="0.5"/><polygon points="211.7,165.2 211.6,165.3 220.1,167.1 220.2,166.9" fill="#4b4b4b" stroke="#4b4b4b" stroke-width="0.5"/><polygon points="184.4,165.4 184.3,165.2 175.8,167 176,167.3" fill="#282828" stroke="#282828" stroke-width="0.5"/><polygon points="211.6,165.3 211.5,165.5 219.9,167.4 220.1,167.1" fill="#515151" stroke="#515151" stroke-width="0.5"/><polygon points="184.6,165.5 184.4,165.4 176,167.3 176.3,167.5" fill="#282828" stroke="#282828" stroke-width="0.5"/><polygon points="211.5,165.5 211.2,165.6 219.5,167.6 219.9,167.4" fill="#565656" stroke="#565656" stroke-width="0.5"/><polygon points="185,165.7 184.6,165.5 176.3,167.5 176.8,167.7" fill="#282828" stroke="#282828" stroke-width="0.5"/><polygon points="211.2,165.6 210.8,165.7 218.9,167.9 219.5,167.6" fill="#5b5b5b" stroke="#5b5b5b" stroke-width="0.5"/><polygon points="185.4,165.8 185,165.7 176.8,167.7 177.5,168" fill="#282828" stroke="#282828" stroke-width="0.5"/><polygon points="210.8,165.7 210.4,165.9 218.1,168.1 218.9,167.9" fill="#606060" stroke="#606060" stroke-width="0.5"/><polygon points="185.9,165.9 185.4,165.8 177.5,168 178.3,168.2" fill="#2f2f2f" stroke="#2f2f2f" stroke-width="0.5"/><polygon points="210.4,165.9 209.8,166 217.2,168.3 218.1,168.1" fill="#646464" stroke="#646464" stroke-width="0.5"/><polygon points="186.5,166.1 185.9,165.9 178.3,168.2 179.3,168.4" fill="#363636" stroke="#363636" stroke-width="0.5"/><polygon points="209.8,166 209.1,166.1 216.2,168.5 217.2,168.3" fill="#676767" stroke="#676767" stroke-width="0.5"/><polygon points="187.2,166.2 186.5,166.1 179.3,168.4 180.4,168.6" fill="#3d3d3d" stroke="#3d3d3d" stroke-width="0.5"/><polygon points="209.1,166.1 208.4,166.3 215,168.7 216.2,168.5" fill="#6a6a6a" stroke="#6a6a6a" stroke-width="0.5"/><polygon points="188,166.3 187.2,166.2 180.4,168.6 181.7,168.8" fill="#444444" stroke="#444444" stroke-width="0.5"/><polygon points="208.4,166.3 207.6,166.4 213.6,168.9 215,168.7" fill="#6d6d6d" stroke="#6d6d6d" stroke-width="0.5"/><polygon points="188.9,166.4 188,166.3 181.7,168.8 183.1,169" fill="#4a4a4a" stroke="#4a4a4a" stroke-width="0.5"/><polygon points="207.6,166.4 206.7,166.5 212.2,169 213.6,168.9" fill="#6f6f6f" stroke="#6f6f6f" stroke-width="0.5"/><polygon points="189.8,166.5 188.9,166.4 183.1,169 184.6,169.1" fill="#4f4f4f" stroke="#4f4f4f" stroke-width="0.5"/><polygon points="206.7,166.5 205.7,166.5 210.6,169.2 212.2,169" fill="#717171" stroke="#717171" stroke-width="0.5"/><polygon points="190.8,166.6 189.8,166.5 184.6,169.1 186.2,169.3" fill="#555555" stroke="#555555" stroke-width="0.5"/><polygon points="205.7,166.5 204.7,166.6 208.9,169.3 210.6,169.2" fill="#727272" stroke="#727272" stroke-width="0.5"/><polygon points="191.9,166.7 190.8,166.6 186.2,169.3 187.9,169.4" fill="#5a5a5a" stroke="#5a5a5a" stroke-width="0.5"/><polygon points="204.7,166.6 203.6,166.7 207.1,169.4 208.9,169.3" fill="#737373" stroke="#737373" stroke-width="0.5"/><polygon points="193,166.7 191.9,166.7 187.9,169.4 189.7,169.5" fill="#5e5e5e" stroke="#5e5e5e" stroke-width="0.5"/><polygon points="203.6,166.7 202.5,166.7 205.3,169.5 207.1,169.4" fill="#737373" stroke="#737373" stroke-width="0.5"/><polygon points="194.1,166.8 193,166.7 189.7,169.5 191.6,169.6" fill="#626262" stroke="#626262" stroke-width="0.5"/><polygon points="202.5,166.7 201.3,166.8 203.4,169.6 205.3,169.5" fill="#737373" stroke="#737373" stroke-width="0.5"/><polygon points="195.3,166.8 194.1,166.8 191.6,169.6 193.5,169.6" fill="#666666" stroke="#666666" stroke-width="0.5"/><polygon points="201.3,166.8 200.1,166.8 201.4,169.6 203.4,169.6" fill="#727272" stroke="#727272" stroke-width="0.5"/><polygon points="196.5,166.8 195.3,166.8 193.5,169.6 195.5,169.7" fill="#696969" stroke="#696969" stroke-width="0.5"/><polygon points="200.1,166.8 198.9,166.8 199.5,169.7 201.4,169.6" fill="#707070" stroke="#707070" stroke-width="0.5"/><polygon points="197.7,166.8 196.5,166.8 195.5,169.7 197.5,169.7" fill="#6c6c6c" stroke="#6c6c6c" stroke-width="0.5"/><polygon points="198.9,166.8 197.7,166.8 197.5,169.7 199.5,169.7" fill="#6f6f6f" stroke="#6f6f6f" stroke-width="0.5"/><polygon points="176.3,166.3 176.8,166.1 172.3,167.9 171.7,168.1" fill="#282828" stroke="#282828" stroke-width="0.5"/><polygon points="219.5,166.2 219.9,166.4 224.5,168.3 224,168" fill="#393939" stroke="#393939" stroke-width="0.5"/><polygon points="176,166.5 176.3,166.3 171.7,168.1 171.3,168.4" fill="#282828" stroke="#282828" stroke-width="0.5"/><polygon points="219.9,166.4 220.1,166.7 224.9,168.6 224.5,168.3" fill="#3f3f3f" stroke="#3f3f3f" stroke-width="0.5"/><polygon points="175.8,166.8 176,166.5 171.3,168.4 171.1,168.7" fill="#282828" stroke="#282828" stroke-width="0.5"/><polygon points="220.1,166.7 220.2,166.9 225,168.9 224.9,168.6" fill="#464646" stroke="#464646" stroke-width="0.5"/><polygon points="175.8,167 175.8,166.8 171.1,168.7 171,169" fill="#282828" stroke="#282828" stroke-width="0.5"/><polygon points="220.2,166.9 220.1,167.1 224.9,169.2 225,168.9" fill="#4b4b4b" stroke="#4b4b4b" stroke-width="0.5"/><polygon points="176,167.3 175.8,167 171,169 171.2,169.3" fill="#282828" stroke="#282828" stroke-width="0.5"/><polygon points="220.1,167.1 219.9,167.4 224.6,169.5 224.9,169.2" fill="#515151" stroke="#515151" stroke-width="0.5"/><polygon points="176.3,167.5 176,167.3 171.2,169.3 171.6,169.6" fill="#282828" stroke="#282828" stroke-width="0.5"/><polygon points="219.9,167.4 219.5,167.6 224.1,169.8 224.6,169.5" fill="#565656" stroke="#565656" stroke-width="0.5"/><polygon points="176.8,167.7 176.3,167.5 171.6,169.6 172.2,169.9" fill="#282828" stroke="#282828" stroke-width="0.5"/><polygon points="219.5,167.6 218.9,167.9 223.4,170 224.1,169.8" fill="#5b5b5b" stroke="#5b5b5b" stroke-width="0.5"/><polygon points="177.5,168 176.8,167.7 172.2,169.9 173,170.2" fill="#282828" stroke="#282828" stroke-width="0.5"/><polygon points="218.9,167.9 218.1,168.1 222.5,170.3 223.4,170" fill="#606060" stroke="#606060" stroke-width="0.5"/><polygon points="178.3,168.2 177.5,168 173,170.2 174,170.5" fill="#2f2f2f" stroke="#2f2f2f" stroke-width="0.5"/><polygon points="218.1,168.1 217.2,168.3 221.4,170.6 222.5,170.3" fill="#646464" stroke="#646464" stroke-width="0.5"/><polygon points="179.3,168.4 178.3,168.2 174,170.5 175.2,170.7" fill="#363636" stroke="#363636" stroke-width="0.5"/><polygon points="217.2,168.3 216.2,168.5 220.1,170.9 221.4,170.6" fill="#676767" stroke="#676767" stroke-width="0.5"/><polygon points="180.4,168.6 179.3,168.4 175.2,170.7 176.6,171" fill="#3d3d3d" stroke="#3d3d3d" stroke-width="0.5"/><polygon points="216.2,168.5 215,168.7 218.6,171.1 220.1,170.9" fill="#6a6a6a" stroke="#6a6a6a" stroke-width="0.5"/><polygon points="181.7,168.8 180.4,168.6 176.6,171 178.1,171.2" fill="#444444" stroke="#444444" stroke-width="0.5"/><polygon points="215,168.7 213.6,168.9 217,171.3 218.6,171.1" fill="#6d6d6d" stroke="#6d6d6d" stroke-width="0.5"/><polygon points="183.1,169 181.7,168.8 178.1,171.2 179.8,171.4" fill="#4a4a4a" stroke="#4a4a4a" stroke-width="0.5"/><polygon points="213.6,168.9 212.2,169 215.2,171.5 217,171.3" fill="#6f6f6f" stroke="#6f6f6f" stroke-width="0.5"/><polygon points="184.6,169.1 183.1,169 179.8,171.4 181.7,171.6" fill="#4f4f4f" stroke="#4f4f4f" stroke-width="0.5"/><polygon points="212.2,169 210.6,169.2 213.3,171.7 215.2,171.5" fill="#717171" stroke="#717171" stroke-width="0.5"/><polygon points="186.2,169.3 184.6,169.1 181.7,171.6 183.7,171.8" fill="#555555" stroke="#555555" stroke-width="0.5"/><polygon points="210.6,169.2 208.9,169.3 211.3,171.9 213.3,171.7" fill="#727272" stroke="#727272" stroke-width="0.5"/><polygon points="187.9,169.4 186.2,169.3 183.7,171.8 185.7,171.9" fill="#5a5a5a" stroke="#5a5a5a" stroke-width="0.5"/><polygon points="208.9,169.3 207.1,169.4 209.1,172 211.3,171.9" fill="#737373" stroke="#737373" stroke-width="0.5"/><polygon points="189.7,169.5 187.9,169.4 185.7,171.9 187.9,172.1" fill="#5e5e5e" stroke="#5e5e5e" stroke-width="0.5"/><polygon points="207.1,169.4 205.3,169.5 206.9,172.1 209.1,172" fill="#737373" stroke="#737373" stroke-width="0.5"/><polygon points="191.6,169.6 189.7,169.5 187.9,172.1 190.2,172.2" fill="#626262" stroke="#626262" stroke-width="0.5"/><polygon points="205.3,169.5 203.4,169.6 204.6,172.2 206.9,172.1" fill="#737373" stroke="#737373" stroke-width="0.5"/><polygon points="193.5,169.6 191.6,169.6 190.2,172.2 192.6,172.2" fill="#666666" stroke="#666666" stroke-width="0.5"/><polygon points="203.4,169.6 201.4,169.6 202.2,172.3 204.6,172.2" fill="#727272" stroke="#727272" stroke-width="0.5"/><polygon points="195.5,169.7 193.5,169.6 192.6,172.2 195,172.3" fill="#696969" stroke="#696969" stroke-width="0.5"/><polygon points="201.4,169.6 199.5,169.7 199.8,172.3 202.2,172.3" fill="#707070" stroke="#707070" stroke-width="0.5"/><polygon points="197.5,169.7 195.5,169.7 195,172.3 197.4,172.3" fill="#6c6c6c" stroke="#6c6c6c" stroke-width="0.5"/><polygon points="199.5,169.7 197.5,169.7 197.4,172.3 199.8,172.3" fill="#6f6f6f" stroke="#6f6f6f" stroke-width="0.5"/><polygon points="193.5,92 193.5,92 195,107.5 195,107.6" fill="#737373" stroke="#737373" stroke-width="0.5"/><polygon points="202.5,92 202.5,92 201,107.6 201,107.5" fill="#a5a5a5" stroke="#a5a5a5" stroke-width="0.5"/><polygon points="193.5,92 193.5,92 195,107.6 195,107.6" fill="#737373" stroke="#737373" stroke-width="0.5"/><polygon points="202.5,92 202.5,92 201,107.6 201,107.6" fill="#aeaeae" stroke="#aeaeae" stroke-width="0.5"/><polygon points="193.6,92 193.5,92 195,107.6 195,107.6" fill="#737373" stroke="#737373" stroke-width="0.5"/><polygon points="202.5,92 202.4,92 200.9,107.6 201,107.6" fill="#b6b6b6" stroke="#b6b6b6" stroke-width="0.5"/><polygon points="193.7,92.1 193.6,92 195,107.6 195.1,107.6" fill="#737373" stroke="#737373" stroke-width="0.5"/><polygon points="202.4,92 202.2,92.1 200.8,107.6 200.9,107.6" fill="#bebebe" stroke="#bebebe" stroke-width="0.5"/><polygon points="193.8,92.1 193.7,92.1 195.1,107.6 195.2,107.6" fill="#737373" stroke="#737373" stroke-width="0.5"/><polygon points="202.2,92.1 202.1,92.1 200.7,107.6 200.8,107.6" fill="#c5c5c5" stroke="#c5c5c5" stroke-width="0.5"/><polygon points="194,92.1 193.8,92.1 195.2,107.6 195.3,107.6" fill="#7b7b7b" stroke="#7b7b7b" stroke-width="0.5"/><polygon points="202.1,92.1 201.9,92.1 200.6,107.6 200.7,107.6" fill="#cccccc" stroke="#cccccc" stroke-width="0.5"/><polygon points="194.2,92.1 194,92.1 195.3,107.6 195.5,107.6" fill="#858585" stroke="#858585" stroke-width="0.5"/><polygon points="201.9,92.1 201.7,92.1 200.5,107.7 200.6,107.6" fill="#d2d2d2" stroke="#d2d2d2" stroke-width="0.5"/><polygon points="194.4,92.1 194.2,92.1 195.5,107.6 195.6,107.7" fill="#8f8f8f" stroke="#8f8f8f" stroke-width="0.5"/><polygon points="201.7,92.1 201.4,92.1 200.3,107.7 200.5,107.7" fill="#d7d7d7" stroke="#d7d7d7" stroke-width="0.5"/><polygon points="194.7,92.1 194.4,92.1 195.6,107.7 195.8,107.7" fill="#999999" stroke="#999999" stroke-width="0.5"/><polygon points="201.4,92.1 201.2,92.1 200.1,107.7 200.3,107.7" fill="#dcdcdc" stroke="#dcdcdc" stroke-width="0.5"/><polygon points="195,92.2 194.7,92.1 195.8,107.7 196,107.7" fill="#a2a2a2" stroke="#a2a2a2" stroke-width="0.5"/><polygon points="201.2,92.1 200.9,92.2 199.9,107.7 200.1,107.7" fill="#e0e0e0" stroke="#e0e0e0" stroke-width="0.5"/><polygon points="195.3,92.2 195,92.2 196,107.7 196.2,107.7" fill="#ababab" stroke="#ababab" stroke-width="0.5"/><polygon points="200.9,92.2 200.5,92.2 199.7,107.7 199.9,107.7" fill="#e2e2e2" stroke="#e2e2e2" stroke-width="0.5"/><polygon points="195.6,92.2 195.3,92.2 196.2,107.7 196.4,107.7" fill="#b4b4b4" stroke="#b4b4b4" stroke-width="0.5"/><polygon points="200.5,92.2 200.2,92.2 199.5,107.7 199.7,107.7" fill="#e5e5e5" stroke="#e5e5e5" stroke-width="0.5"/><polygon points="196,92.2 195.6,92.2 196.4,107.7 196.6,107.7" fill="#bcbcbc" stroke="#bcbcbc" stroke-width="0.5"/><polygon points="200.2,92.2 199.8,92.2 199.2,107.7 199.5,107.7" fill="#e6e6e6" stroke="#e6e6e6" stroke-width="0.5"/><polygon points="196.3,92.2 196,92.2 196.6,107.7 196.9,107.7" fill="#c3c3c3" stroke="#c3c3c3" stroke-width="0.5"/><polygon points="199.8,92.2 199.5,92.2 199,107.7 199.2,107.7" fill="#e6e6e6" stroke="#e6e6e6" stroke-width="0.5"/><polygon points="196.7,92.2 196.3,92.2 196.9,107.7 197.1,107.7" fill="#cacaca" stroke="#cacaca" stroke-width="0.5"/><polygon points="199.5,92.2 199.1,92.2 198.7,107.7 199,107.7" fill="#e5e5e5" stroke="#e5e5e5" stroke-width="0.5"/><polygon points="197.1,92.2 196.7,92.2 197.1,107.7 197.4,107.7" fill="#d0d0d0" stroke="#d0d0d0" stroke-width="0.5"/><polygon points="199.1,92.2 198.7,92.2 198.5,107.7 198.7,107.7" fill="#e4e4e4" stroke="#e4e4e4" stroke-width="0.5"/><polygon points="197.5,92.2 197.1,92.2 197.4,107.7 197.7,107.7" fill="#d6d6d6" stroke="#d6d6d6" stroke-width="0.5"/><polygon points="198.7,92.2 198.3,92.2 198.2,107.7 198.5,107.7" fill="#e2e2e2" stroke="#e2e2e2" stroke-width="0.5"/><polygon points="197.9,92.2 197.5,92.2 197.7,107.7 197.9,107.7" fill="#dbdbdb" stroke="#dbdbdb" stroke-width="0.5"/><polygon points="198.3,92.2 197.9,92.2 197.9,107.7 198.2,107.7" fill="#dfdfdf" stroke="#dfdfdf" stroke-width="0.5"/><polygon points="195,107.6 195,107.5 195.9,120.9 195.9,120.9" fill="#737373" stroke="#737373" stroke-width="0.5"/><polygon points="201,107.5 201,107.6 200.1,120.9 200.1,120.9" fill="#a5a5a5" stroke="#a5a5a5" stroke-width="0.5"/><polygon points="195,107.6 195,107.6 195.9,120.9 195.9,120.9" fill="#737373" stroke="#737373" stroke-width="0.5"/><polygon points="201,107.6 201,107.6 200.1,120.9 200.1,120.9" fill="#aeaeae" stroke="#aeaeae" stroke-width="0.5"/><polygon points="195,107.6 195,107.6 195.9,120.9 195.9,120.9" fill="#737373" stroke="#737373" stroke-width="0.5"/><polygon points="201,107.6 200.9,107.6 200.1,120.9 200.1,120.9" fill="#b6b6b6" stroke="#b6b6b6" stroke-width="0.5"/><polygon points="195.1,107.6 195,107.6 195.9,120.9 196,120.9" fill="#737373" stroke="#737373" stroke-width="0.5"/><polygon points="200.9,107.6 200.8,107.6 200,120.9 200.1,120.9" fill="#bebebe" stroke="#bebebe" stroke-width="0.5"/><polygon points="195.2,107.6 195.1,107.6 196,120.9 196,120.9" fill="#737373" stroke="#737373" stroke-width="0.5"/><polygon points="200.8,107.6 200.7,107.6 199.9,120.9 200,120.9" fill="#c5c5c5" stroke="#c5c5c5" stroke-width="0.5"/><polygon points="195.3,107.6 195.2,107.6 196,120.9 196.1,120.9" fill="#7b7b7b" stroke="#7b7b7b" stroke-width="0.5"/><polygon points="200.7,107.6 200.6,107.6 199.8,120.9 199.9,120.9" fill="#cccccc" stroke="#cccccc" stroke-width="0.5"/><polygon points="195.5,107.6 195.3,107.6 196.1,120.9 196.2,121" fill="#858585" stroke="#858585" stroke-width="0.5"/><polygon points="200.6,107.6 200.5,107.7 199.7,121 199.8,120.9" fill="#d2d2d2" stroke="#d2d2d2" stroke-width="0.5"/><polygon points="195.6,107.7 195.5,107.6 196.2,121 196.3,121" fill="#8f8f8f" stroke="#8f8f8f" stroke-width="0.5"/><polygon points="200.5,107.7 200.3,107.7 199.6,121 199.7,121" fill="#d7d7d7" stroke="#d7d7d7" stroke-width="0.5"/><polygon points="195.8,107.7 195.6,107.7 196.3,121 196.4,121" fill="#999999" stroke="#999999" stroke-width="0.5"/><polygon points="200.3,107.7 200.1,107.7 199.5,121 199.6,121" fill="#dcdcdc" stroke="#dcdcdc" stroke-width="0.5"/><polygon points="196,107.7 195.8,107.7 196.4,121 196.6,121" fill="#a2a2a2" stroke="#a2a2a2" stroke-width="0.5"/><polygon points="200.1,107.7 199.9,107.7 199.3,121 199.5,121" fill="#e0e0e0" stroke="#e0e0e0" stroke-width="0.5"/><polygon points="196.2,107.7 196,107.7 196.6,121 196.7,121" fill="#ababab" stroke="#ababab" stroke-width="0.5"/><polygon points="199.9,107.7 199.7,107.7 199.2,121 199.3,121" fill="#e2e2e2" stroke="#e2e2e2" stroke-width="0.5"/><polygon points="196.4,107.7 196.2,107.7 196.7,121 196.9,121" fill="#b4b4b4" stroke="#b4b4b4" stroke-width="0.5"/><polygon points="199.7,107.7 199.5,107.7 199,121 199.2,121" fill="#e5e5e5" stroke="#e5e5e5" stroke-width="0.5"/><polygon points="196.6,107.7 196.4,107.7 196.9,121 197,121" fill="#bcbcbc" stroke="#bcbcbc" stroke-width="0.5"/><polygon points="199.5,107.7 199.2,107.7 198.9,121 199,121" fill="#e6e6e6" stroke="#e6e6e6" stroke-width="0.5"/><polygon points="196.9,107.7 196.6,107.7 197,121 197.2,121" fill="#c3c3c3" stroke="#c3c3c3" stroke-width="0.5"/><polygon points="199.2,107.7 199,107.7 198.7,121 198.9,121" fill="#e6e6e6" stroke="#e6e6e6" stroke-width="0.5"/><polygon points="197.1,107.7 196.9,107.7 197.2,121 197.4,121" fill="#cacaca" stroke="#cacaca" stroke-width="0.5"/><polygon points="199,107.7 198.7,107.7 198.5,121 198.7,121" fill="#e5e5e5" stroke="#e5e5e5" stroke-width="0.5"/><polygon points="197.4,107.7 197.1,107.7 197.4,121 197.6,121" fill="#d0d0d0" stroke="#d0d0d0" stroke-width="0.5"/><polygon points="198.7,107.7 198.5,107.7 198.3,121 198.5,121" fill="#e4e4e4" stroke="#e4e4e4" stroke-width="0.5"/><polygon points="197.7,107.7 197.4,107.7 197.6,121 197.8,121" fill="#d6d6d6" stroke="#d6d6d6" stroke-width="0.5"/><polygon points="198.5,107.7 198.2,107.7 198.1,121 198.3,121" fill="#e2e2e2" stroke="#e2e2e2" stroke-width="0.5"/><polygon points="197.9,107.7 197.7,107.7 197.8,121 198,121" fill="#dbdbdb" stroke="#dbdbdb" stroke-width="0.5"/><polygon points="198.2,107.7 197.9,107.7 198,121 198.1,121" fill="#dfdfdf" stroke="#dfdfdf" stroke-width="0.5"/><polygon points="195.9,120.9 195.9,120.9 195.9,135.1 195.9,135.1" fill="#737373" stroke="#737373" stroke-width="0.5"/><polygon points="200.1,120.9 200.1,120.9 200.1,135.1 200.1,135.1" fill="#a5a5a5" stroke="#a5a5a5" stroke-width="0.5"/><polygon points="195.9,120.9 195.9,120.9 195.9,135.1 195.9,135.1" fill="#737373" stroke="#737373" stroke-width="0.5"/><polygon points="200.1,120.9 200.1,120.9 200.1,135.1 200.1,135.1" fill="#aeaeae" stroke="#aeaeae" stroke-width="0.5"/><polygon points="195.9,120.9 195.9,120.9 195.9,135.1 195.9,135.1" fill="#737373" stroke="#737373" stroke-width="0.5"/><polygon points="200.1,120.9 200.1,120.9 200.1,135.1 200.1,135.1" fill="#b6b6b6" stroke="#b6b6b6" stroke-width="0.5"/><polygon points="196,120.9 195.9,120.9 195.9,135.1 196,135.1" fill="#737373" stroke="#737373" stroke-width="0.5"/><polygon points="200.1,120.9 200,120.9 200,135.1 200.1,135.1" fill="#bebebe" stroke="#bebebe" stroke-width="0.5"/><polygon points="196,120.9 196,120.9 196,135.1 196,135.1" fill="#737373" stroke="#737373" stroke-width="0.5"/><polygon points="200,120.9 199.9,120.9 199.9,135.1 200,135.1" fill="#c5c5c5" stroke="#c5c5c5" stroke-width="0.5"/><polygon points="196.1,120.9 196,120.9 196,135.1 196.1,135.2" fill="#7b7b7b" stroke="#7b7b7b" stroke-width="0.5"/><polygon points="199.9,120.9 199.8,120.9 199.8,135.2 199.9,135.1" fill="#cccccc" stroke="#cccccc" stroke-width="0.5"/><polygon points="196.2,121 196.1,120.9 196.1,135.2 196.2,135.2" fill="#858585" stroke="#858585" stroke-width="0.5"/><polygon points="199.8,120.9 199.7,121 199.7,135.2 199.8,135.2" fill="#d2d2d2" stroke="#d2d2d2" stroke-width="0.5"/><polygon points="196.3,121 196.2,121 196.2,135.2 196.3,135.2" fill="#8f8f8f" stroke="#8f8f8f" stroke-width="0.5"/><polygon points="199.7,121 199.6,121 199.6,135.2 199.7,135.2" fill="#d7d7d7" stroke="#d7d7d7" stroke-width="0.5"/><polygon points="196.4,121 196.3,121 196.3,135.2 196.4,135.2" fill="#999999" stroke="#999999" stroke-width="0.5"/><polygon points="199.6,121 199.5,121 199.5,135.2 199.6,135.2" fill="#dcdcdc" stroke="#dcdcdc" stroke-width="0.5"/><polygon points="196.6,121 196.4,121 196.4,135.2 196.6,135.2" fill="#a2a2a2" stroke="#a2a2a2" stroke-width="0.5"/><polygon points="199.5,121 199.3,121 199.3,135.2 199.5,135.2" fill="#e0e0e0" stroke="#e0e0e0" stroke-width="0.5"/><polygon points="196.7,121 196.6,121 196.6,135.2 196.7,135.2" fill="#ababab" stroke="#ababab" stroke-width="0.5"/><polygon points="199.3,121 199.2,121 199.2,135.2 199.3,135.2" fill="#e2e2e2" stroke="#e2e2e2" stroke-width="0.5"/><polygon points="196.9,121 196.7,121 196.7,135.2 196.9,135.2" fill="#b4b4b4" stroke="#b4b4b4" stroke-width="0.5"/><polygon points="199.2,121 199,121 199,135.2 199.2,135.2" fill="#e5e5e5" stroke="#e5e5e5" stroke-width="0.5"/><polygon points="197,121 196.9,121 196.9,135.2 197,135.2" fill="#bcbcbc" stroke="#bcbcbc" stroke-width="0.5"/><polygon points="199,121 198.9,121 198.9,135.2 199,135.2" fill="#e6e6e6" stroke="#e6e6e6" stroke-width="0.5"/><polygon points="197.2,121 197,121 197,135.2 197.2,135.2" fill="#c3c3c3" stroke="#c3c3c3" stroke-width="0.5"/><polygon points="198.9,121 198.7,121 198.7,135.2 198.9,135.2" fill="#e6e6e6" stroke="#e6e6e6" stroke-width="0.5"/><polygon points="197.4,121 197.2,121 197.2,135.2 197.4,135.2" fill="#cacaca" stroke="#cacaca" stroke-width="0.5"/><polygon points="198.7,121 198.5,121 198.5,135.2 198.7,135.2" fill="#e5e5e5" stroke="#e5e5e5" stroke-width="0.5"/><polygon points="197.6,121 197.4,121 197.4,135.2 197.6,135.3" fill="#d0d0d0" stroke="#d0d0d0" stroke-width="0.5"/><polygon points="198.5,121 198.3,121 198.3,135.3 198.5,135.2" fill="#e4e4e4" stroke="#e4e4e4" stroke-width="0.5"/><polygon points="197.8,121 197.6,121 197.6,135.3 197.8,135.3" fill="#d6d6d6" stroke="#d6d6d6" stroke-width="0.5"/><polygon points="198.3,121 198.1,121 198.1,135.3 198.3,135.3" fill="#e2e2e2" stroke="#e2e2e2" stroke-width="0.5"/><polygon points="198,121 197.8,121 197.8,135.3 198,135.3" fill="#dbdbdb" stroke="#dbdbdb" stroke-width="0.5"/><polygon points="198.1,121 198,121 198,135.3 198.1,135.3" fill="#dfdfdf" stroke="#dfdfdf" stroke-width="0.5"/><polygon points="195.9,135.1 195.9,135.1 195,148.6 195,148.6" fill="#737373" stroke="#737373" stroke-width="0.5"/><polygon points="200.1,135.1 200.1,135.1 201,148.6 201,148.6" fill="#a5a5a5" stroke="#a5a5a5" stroke-width="0.5"/><polygon points="195.9,135.1 195.9,135.1 195,148.6 195,148.6" fill="#737373" stroke="#737373" stroke-width="0.5"/><polygon points="200.1,135.1 200.1,135.1 201,148.7 201,148.6" fill="#aeaeae" stroke="#aeaeae" stroke-width="0.5"/><polygon points="195.9,135.1 195.9,135.1 195,148.6 195.1,148.7" fill="#737373" stroke="#737373" stroke-width="0.5"/><polygon points="200.1,135.1 200.1,135.1 200.9,148.7 201,148.7" fill="#b6b6b6" stroke="#b6b6b6" stroke-width="0.5"/><polygon points="196,135.1 195.9,135.1 195.1,148.7 195.1,148.7" fill="#737373" stroke="#737373" stroke-width="0.5"/><polygon points="200.1,135.1 200,135.1 200.8,148.7 200.9,148.7" fill="#bebebe" stroke="#bebebe" stroke-width="0.5"/><polygon points="196,135.1 196,135.1 195.1,148.7 195.2,148.7" fill="#737373" stroke="#737373" stroke-width="0.5"/><polygon points="200,135.1 199.9,135.1 200.7,148.7 200.8,148.7" fill="#c5c5c5" stroke="#c5c5c5" stroke-width="0.5"/><polygon points="196.1,135.2 196,135.1 195.2,148.7 195.3,148.7" fill="#7b7b7b" stroke="#7b7b7b" stroke-width="0.5"/><polygon points="199.9,135.1 199.8,135.2 200.6,148.8 200.7,148.7" fill="#cccccc" stroke="#cccccc" stroke-width="0.5"/><polygon points="196.2,135.2 196.1,135.2 195.3,148.7 195.5,148.8" fill="#858585" stroke="#858585" stroke-width="0.5"/><polygon points="199.8,135.2 199.7,135.2 200.4,148.8 200.6,148.8" fill="#d2d2d2" stroke="#d2d2d2" stroke-width="0.5"/><polygon points="196.3,135.2 196.2,135.2 195.5,148.8 195.6,148.8" fill="#8f8f8f" stroke="#8f8f8f" stroke-width="0.5"/><polygon points="199.7,135.2 199.6,135.2 200.3,148.8 200.4,148.8" fill="#d7d7d7" stroke="#d7d7d7" stroke-width="0.5"/><polygon points="196.4,135.2 196.3,135.2 195.6,148.8 195.8,148.8" fill="#999999" stroke="#999999" stroke-width="0.5"/><polygon points="199.6,135.2 199.5,135.2 200.1,148.8 200.3,148.8" fill="#dcdcdc" stroke="#dcdcdc" stroke-width="0.5"/><polygon points="196.6,135.2 196.4,135.2 195.8,148.8 196,148.8" fill="#a2a2a2" stroke="#a2a2a2" stroke-width="0.5"/><polygon points="199.5,135.2 199.3,135.2 199.9,148.8 200.1,148.8" fill="#e0e0e0" stroke="#e0e0e0" stroke-width="0.5"/><polygon points="196.7,135.2 196.6,135.2 196,148.8 196.2,148.8" fill="#ababab" stroke="#ababab" stroke-width="0.5"/><polygon points="199.3,135.2 199.2,135.2 199.7,148.9 199.9,148.8" fill="#e2e2e2" stroke="#e2e2e2" stroke-width="0.5"/><polygon points="196.9,135.2 196.7,135.2 196.2,148.8 196.4,148.9" fill="#b4b4b4" stroke="#b4b4b4" stroke-width="0.5"/><polygon points="199.2,135.2 199,135.2 199.5,148.9 199.7,148.9" fill="#e5e5e5" stroke="#e5e5e5" stroke-width="0.5"/><polygon points="197,135.2 196.9,135.2 196.4,148.9 196.7,148.9" fill="#bcbcbc" stroke="#bcbcbc" stroke-width="0.5"/><polygon points="199,135.2 198.9,135.2 199.2,148.9 199.5,148.9" fill="#e6e6e6" stroke="#e6e6e6" stroke-width="0.5"/><polygon points="197.2,135.2 197,135.2 196.7,148.9 196.9,148.9" fill="#c3c3c3" stroke="#c3c3c3" stroke-width="0.5"/><polygon points="198.9,135.2 198.7,135.2 199,148.9 199.2,148.9" fill="#e6e6e6" stroke="#e6e6e6" stroke-width="0.5"/><polygon points="197.4,135.2 197.2,135.2 196.9,148.9 197.1,148.9" fill="#cacaca" stroke="#cacaca" stroke-width="0.5"/><polygon points="198.7,135.2 198.5,135.2 198.7,148.9 199,148.9" fill="#e5e5e5" stroke="#e5e5e5" stroke-width="0.5"/><polygon points="197.6,135.3 197.4,135.2 197.1,148.9 197.4,148.9" fill="#d0d0d0" stroke="#d0d0d0" stroke-width="0.5"/><polygon points="198.5,135.2 198.3,135.3 198.5,148.9 198.7,148.9" fill="#e4e4e4" stroke="#e4e4e4" stroke-width="0.5"/><polygon points="197.8,135.3 197.6,135.3 197.4,148.9 197.7,148.9" fill="#d6d6d6" stroke="#d6d6d6" stroke-width="0.5"/><polygon points="198.3,135.3 198.1,135.3 198.2,148.9 198.5,148.9" fill="#e2e2e2" stroke="#e2e2e2" stroke-width="0.5"/><polygon points="198,135.3 197.8,135.3 197.7,148.9 197.9,148.9" fill="#dbdbdb" stroke="#dbdbdb" stroke-width="0.5"/><polygon points="198.1,135.3 198,135.3 197.9,148.9 198.2,148.9" fill="#dfdfdf" stroke="#dfdfdf" stroke-width="0.5"/><polygon points="195,148.6 195,148.6 193.5,163.9 193.5,163.9" fill="#737373" stroke="#737373" stroke-width="0.5"/><polygon points="201,148.6 201,148.6 202.5,164 202.5,163.9" fill="#a5a5a5" stroke="#a5a5a5" stroke-width="0.5"/><polygon points="195,148.6 195,148.6 193.5,163.9 193.5,164" fill="#737373" stroke="#737373" stroke-width="0.5"/><polygon points="201,148.6 201,148.7 202.4,164 202.5,164" fill="#aeaeae" stroke="#aeaeae" stroke-width="0.5"/><polygon points="195.1,148.7 195,148.6 193.5,164 193.6,164" fill="#737373" stroke="#737373" stroke-width="0.5"/><polygon points="201,148.7 200.9,148.7 202.3,164.1 202.4,164" fill="#b6b6b6" stroke="#b6b6b6" stroke-width="0.5"/><polygon points="195.1,148.7 195.1,148.7 193.6,164 193.7,164.1" fill="#737373" stroke="#737373" stroke-width="0.5"/><polygon points="200.9,148.7 200.8,148.7 202.2,164.1 202.3,164.1" fill="#bebebe" stroke="#bebebe" stroke-width="0.5"/><polygon points="195.2,148.7 195.1,148.7 193.7,164.1 193.9,164.1" fill="#737373" stroke="#737373" stroke-width="0.5"/><polygon points="200.8,148.7 200.7,148.7 202,164.2 202.2,164.1" fill="#c5c5c5" stroke="#c5c5c5" stroke-width="0.5"/><polygon points="195.3,148.7 195.2,148.7 193.9,164.1 194,164.2" fill="#7b7b7b" stroke="#7b7b7b" stroke-width="0.5"/><polygon points="200.7,148.7 200.6,148.8 201.9,164.2 202,164.2" fill="#cccccc" stroke="#cccccc" stroke-width="0.5"/><polygon points="195.5,148.8 195.3,148.7 194,164.2 194.2,164.2" fill="#858585" stroke="#858585" stroke-width="0.5"/><polygon points="200.6,148.8 200.4,148.8 201.6,164.2 201.9,164.2" fill="#d2d2d2" stroke="#d2d2d2" stroke-width="0.5"/><polygon points="195.6,148.8 195.5,148.8 194.2,164.2 194.5,164.3" fill="#8f8f8f" stroke="#8f8f8f" stroke-width="0.5"/><polygon points="200.4,148.8 200.3,148.8 201.4,164.3 201.6,164.2" fill="#d7d7d7" stroke="#d7d7d7" stroke-width="0.5"/><polygon points="195.8,148.8 195.6,148.8 194.5,164.3 194.7,164.3" fill="#999999" stroke="#999999" stroke-width="0.5"/><polygon points="200.3,148.8 200.1,148.8 201.1,164.3 201.4,164.3" fill="#dcdcdc" stroke="#dcdcdc" stroke-width="0.5"/><polygon points="196,148.8 195.8,148.8 194.7,164.3 195,164.3" fill="#a2a2a2" stroke="#a2a2a2" stroke-width="0.5"/><polygon points="200.1,148.8 199.9,148.8 200.8,164.3 201.1,164.3" fill="#e0e0e0" stroke="#e0e0e0" stroke-width="0.5"/><polygon points="196.2,148.8 196,148.8 195,164.3 195.3,164.4" fill="#ababab" stroke="#ababab" stroke-width="0.5"/><polygon points="199.9,148.8 199.7,148.9 200.5,164.4 200.8,164.3" fill="#e2e2e2" stroke="#e2e2e2" stroke-width="0.5"/><polygon points="196.4,148.9 196.2,148.8 195.3,164.4 195.6,164.4" fill="#b4b4b4" stroke="#b4b4b4" stroke-width="0.5"/><polygon points="199.7,148.9 199.5,148.9 200.2,164.4 200.5,164.4" fill="#e5e5e5" stroke="#e5e5e5" stroke-width="0.5"/><polygon points="196.7,148.9 196.4,148.9 195.6,164.4 196,164.4" fill="#bcbcbc" stroke="#bcbcbc" stroke-width="0.5"/><polygon points="199.5,148.9 199.2,148.9 199.8,164.4 200.2,164.4" fill="#e6e6e6" stroke="#e6e6e6" stroke-width="0.5"/><polygon points="196.9,148.9 196.7,148.9 196,164.4 196.4,164.4" fill="#c3c3c3" stroke="#c3c3c3" stroke-width="0.5"/><polygon points="199.2,148.9 199,148.9 199.5,164.4 199.8,164.4" fill="#e6e6e6" stroke="#e6e6e6" stroke-width="0.5"/><polygon points="197.1,148.9 196.9,148.9 196.4,164.4 196.7,164.4" fill="#cacaca" stroke="#cacaca" stroke-width="0.5"/><polygon points="199,148.9 198.7,148.9 199.1,164.4 199.5,164.4" fill="#e5e5e5" stroke="#e5e5e5" stroke-width="0.5"/><polygon points="197.4,148.9 197.1,148.9 196.7,164.4 197.1,164.4" fill="#d0d0d0" stroke="#d0d0d0" stroke-width="0.5"/><polygon points="198.7,148.9 198.5,148.9 198.7,164.5 199.1,164.4" fill="#e4e4e4" stroke="#e4e4e4" stroke-width="0.5"/><polygon points="197.7,148.9 197.4,148.9 197.1,164.4 197.5,164.5" fill="#d6d6d6" stroke="#d6d6d6" stroke-width="0.5"/><polygon points="198.5,148.9 198.2,148.9 198.3,164.5 198.7,164.5" fill="#e2e2e2" stroke="#e2e2e2" stroke-width="0.5"/><polygon points="197.9,148.9 197.7,148.9 197.5,164.5 197.9,164.5" fill="#dbdbdb" stroke="#dbdbdb" stroke-width="0.5"/><polygon points="198.2,148.9 197.9,148.9 197.9,164.5 198.3,164.5" fill="#dfdfdf" stroke="#dfdfdf" stroke-width="0.5"/><polyline points="193.5,92 195,107.5 195.9,120.9 195.9,135.1 195,148.6 193.5,163.9" stroke="#3a3a3a" stroke-width="0.9" fill="none"/><polyline points="202.5,92 201,107.5 200.1,120.9 200.1,135.1 201,148.6 202.5,163.9" stroke="#4a4a4a" stroke-width="0.9" fill="none"/><polygon points="234.9,51.9 234.8,51.9 202.5,92 202.5,92" fill="#707070" stroke="#707070" stroke-width="0.5"/><polygon points="161.4,51.9 161.2,51.9 193.5,92 193.5,92" fill="#323232" stroke="#323232" stroke-width="0.5"/><polygon points="234.8,51.9 234.4,51.9 202.5,92 202.5,92" fill="#787878" stroke="#787878" stroke-width="0.5"/><polygon points="161.9,51.9 161.4,51.9 193.5,92 193.6,92" fill="#323232" stroke="#323232" stroke-width="0.5"/><polygon points="234.4,51.9 233.7,52 202.4,92 202.5,92" fill="#808080" stroke="#808080" stroke-width="0.5"/><polygon points="162.7,52 161.9,51.9 193.6,92 193.7,92.1" fill="#323232" stroke="#323232" stroke-width="0.5"/><polygon points="233.7,52 232.8,52 202.2,92.1 202.4,92" fill="#878787" stroke="#878787" stroke-width="0.5"/><polygon points="163.8,52 162.7,52 193.7,92.1 193.8,92.1" fill="#323232" stroke="#323232" stroke-width="0.5"/><polygon points="232.8,52 231.6,52 202.1,92.1 202.2,92.1" fill="#8e8e8e" stroke="#8e8e8e" stroke-width="0.5"/><polygon points="165.1,52 163.8,52 193.8,92.1 194,92.1" fill="#414141" stroke="#414141" stroke-width="0.5"/><polygon points="231.6,52 230.1,52 201.9,92.1 202.1,92.1" fill="#949494" stroke="#949494" stroke-width="0.5"/><polygon points="166.7,52 165.1,52 194,92.1 194.2,92.1" fill="#4e4e4e" stroke="#4e4e4e" stroke-width="0.5"/><polygon points="230.1,52 228.4,52 201.7,92.1 201.9,92.1" fill="#999999" stroke="#999999" stroke-width="0.5"/><polygon points="168.6,52 166.7,52 194.2,92.1 194.4,92.1" fill="#595959" stroke="#595959" stroke-width="0.5"/><polygon points="228.4,52 226.4,52 201.4,92.1 201.7,92.1" fill="#9e9e9e" stroke="#9e9e9e" stroke-width="0.5"/><polygon points="170.7,52 168.6,52 194.4,92.1 194.7,92.1" fill="#636363" stroke="#636363" stroke-width="0.5"/><polygon points="226.4,52 224.2,52.1 201.2,92.1 201.4,92.1" fill="#a1a1a1" stroke="#a1a1a1" stroke-width="0.5"/><polygon points="173,52.1 170.7,52 194.7,92.1 195,92.2" fill="#6d6d6d" stroke="#6d6d6d" stroke-width="0.5"/><polygon points="224.2,52.1 221.7,52.1 200.9,92.2 201.2,92.1" fill="#a5a5a5" stroke="#a5a5a5" stroke-width="0.5"/><polygon points="175.5,52.1 173,52.1 195,92.2 195.3,92.2" fill="#767676" stroke="#767676" stroke-width="0.5"/><polygon points="221.7,52.1 219.1,52.1 200.5,92.2 200.9,92.2" fill="#a7a7a7" stroke="#a7a7a7" stroke-width="0.5"/><polygon points="178.2,52.1 175.5,52.1 195.3,92.2 195.6,92.2" fill="#7e7e7e" stroke="#7e7e7e" stroke-width="0.5"/><polygon points="219.1,52.1 216.3,52.1 200.2,92.2 200.5,92.2" fill="#a9a9a9" stroke="#a9a9a9" stroke-width="0.5"/><polygon points="181.1,52.1 178.2,52.1 195.6,92.2 196,92.2" fill="#858585" stroke="#858585" stroke-width="0.5"/><polygon points="216.3,52.1 213.3,52.1 199.8,92.2 200.2,92.2" fill="#aaaaaa" stroke="#aaaaaa" stroke-width="0.5"/><polygon points="184.1,52.1 181.1,52.1 196,92.2 196.3,92.2" fill="#8c8c8c" stroke="#8c8c8c" stroke-width="0.5"/><polygon points="213.3,52.1 210.2,52.1 199.5,92.2 199.8,92.2" fill="#aaaaaa" stroke="#aaaaaa" stroke-width="0.5"/><polygon points="187.3,52.1 184.1,52.1 196.3,92.2 196.7,92.2" fill="#929292" stroke="#929292" stroke-width="0.5"/><polygon points="210.2,52.1 207.1,52.1 199.1,92.2 199.5,92.2" fill="#aaaaaa" stroke="#aaaaaa" stroke-width="0.5"/><polygon points="190.5,52.1 187.3,52.1 196.7,92.2 197.1,92.2" fill="#979797" stroke="#979797" stroke-width="0.5"/><polygon points="207.1,52.1 203.8,52.1 198.7,92.2 199.1,92.2" fill="#a8a8a8" stroke="#a8a8a8" stroke-width="0.5"/><polygon points="193.8,52.1 190.5,52.1 197.1,92.2 197.5,92.2" fill="#9c9c9c" stroke="#9c9c9c" stroke-width="0.5"/><polygon points="203.8,52.1 200.5,52.1 198.3,92.2 198.7,92.2" fill="#a6a6a6" stroke="#a6a6a6" stroke-width="0.5"/><polygon points="197.1,52.1 193.8,52.1 197.5,92.2 197.9,92.2" fill="#a0a0a0" stroke="#a0a0a0" stroke-width="0.5"/><polygon points="200.5,52.1 197.1,52.1 197.9,92.2 198.3,92.2" fill="#a4a4a4" stroke="#a4a4a4" stroke-width="0.5"/><path d="M161.2,51.9 L193.5,92 M234.9,51.9 L202.5,92" stroke="#2a2a2a" stroke-width="1" fill="none"/>
<polygon points="32,3.2 42.6,3.2 42.6,19.6 32,19.6 32,16.6 39.4,16.6 39.4,13.1 32,13.1 32,10 39.4,10 39.4,6.2 32,6.2" fill="#ffff30" stroke="#000" stroke-width="1.3" stroke-linejoin="round"/>

</svg>
</div>

<div class="a" style="left:0;top:5px;width:256px;height:1px;background:#8e8e88"></div>
<div class="a" style="left:0;top:6px;width:256px;height:1px;background:#686862"></div>
<div class="a" style="left:259px;top:5px;width:399px;height:1px;background:#8e8e88"></div>
<div class="a" style="left:259px;top:6px;width:399px;height:1px;background:#686862"></div>
<div class="a" style="left:255px;top:7px;width:1px;height:325px;background:#8c8c8a"></div>
<div class="a" style="left:255px;top:336px;width:1px;height:319px;background:#8c8c8a"></div>
<div class="a" style="left:657px;top:336px;width:1px;height:319px;background:#2f6f9c"></div>
<!-- right panel -->
<div class="tab" style="left:694px;top:6px;width:32px;height:14px"><span class="ts">Groups</span></div>
<div class="tab" style="left:727px;top:6px;width:40px;height:14px"><span class="ts">Materials</span></div>
<div class="tab" style="left:768px;top:6px;width:30px;height:14px"><span class="ts">Joints</span></div>
<div class="a" style="left:660px;top:19px;width:140px;height:1px;background:#919b9c"></div>
<div class="a" style="left:661px;top:20px;width:139px;height:635px;background:linear-gradient(90deg,#fdfdfb,#f6f5ee 3px,#ece9d8 5px)"></div>
<div class="a" style="left:661px;top:20px;width:139px;height:1px;background:#fcfcf8"></div>
<div class="tab" style="left:660px;top:4px;width:34px;height:17px;background:#fcfcfe;border-color:#e3a13a #919b9c transparent #919b9c;border-top-width:2px"><span class="ts" style="top:0.6px">Model</span></div>
<!-- Tools group -->
<div class="a" style="left:664px;top:27px;width:145px;height:181px;border:1px solid #d0d0bf;border-radius:4px"></div>
<div class="a" style="left:669px;top:24px;width:23px;height:7px;background:#ece9d8"></div>
<div class="t" style="left:670px;top:22.2px;color:#14306e">Tools</div>
<div class="btn sel" style="left:671px;top:38px;width:59px"><span>Select</span></div>
<div class="btn " style="left:734px;top:38px;width:59px"><span>Move</span></div>
<div class="btn " style="left:671px;top:53px;width:59px"><span>Rotate</span></div>
<div class="btn " style="left:734px;top:53px;width:59px"><span>Scale</span></div>
<div class="btn " style="left:671px;top:71px;width:59px"><span>Vertex</span></div>
<div class="btn " style="left:734px;top:71px;width:59px"><span>Face</span></div>
<div class="btn " style="left:671px;top:86px;width:59px"><span>Sphere</span></div>
<div class="btn " style="left:734px;top:86px;width:59px"><span>GeoSphere</span></div>
<div class="btn " style="left:671px;top:101px;width:59px"><span>Box</span></div>
<div class="btn " style="left:734px;top:101px;width:59px"><span>Cylinder</span></div>
<div class="btn " style="left:671px;top:116px;width:59px"><span>Plane</span></div>
<div class="btn " style="left:671px;top:134px;width:59px"><span>Extrude</span></div>
<div class="btn " style="left:734px;top:134px;width:59px"><span>Joint</span></div>
<div class="btn plain" style="left:671px;top:157px;width:60px"><span>Comment</span></div>
<div class="cb" style="left:670px;top:174px"><svg width="10" height="10"><path d="M2.5,4.8 L4.4,6.7 L8.1,2.8" stroke="#1e9a1e" stroke-width="1.8" fill="none"/></svg></div>
<div class="t" style="left:683px;top:173.7px">Redraw All Viewports</div>
<div class="cb" style="left:670px;top:189px"><svg width="10" height="10"><path d="M2.5,4.8 L4.4,6.7 L8.1,2.8" stroke="#1e9a1e" stroke-width="1.8" fill="none"/></svg></div>
<div class="t" style="left:682.5px;top:188.6px">Auto Tool</div>
<!-- Select options group -->
<div class="a" style="left:664px;top:216px;width:145px;height:62px;border:1px solid #d0d0bf;border-radius:4px"></div>
<div class="a" style="left:669px;top:212px;width:54px;height:8px;background:#ece9d8"></div>
<div class="t" style="left:670px;top:211.5px;color:#1f48a0">Select Options</div>
<div class="btn wh" style="left:671px;top:224px;width:28px"><span>Vertex</span></div>
<div class="btn " style="left:702px;top:224px;width:28px"><span>Face</span></div>
<div class="btn " style="left:733px;top:224px;width:29px"><span>Group</span></div>
<div class="btn " style="left:765px;top:224px;width:28px"><span>Joint</span></div>
<div class="cb" style="left:670px;top:244px"></div>
<div class="t" style="left:683px;top:243.7px">Ignore Backfaces</div>
<div class="cb" style="left:670px;top:259px;border-color:#cdcbbd;background:#fbfbf9"></div>
<div class="t" style="left:683px;top:258.5px;color:#aca899">By Vertex</div>
</body></html>
